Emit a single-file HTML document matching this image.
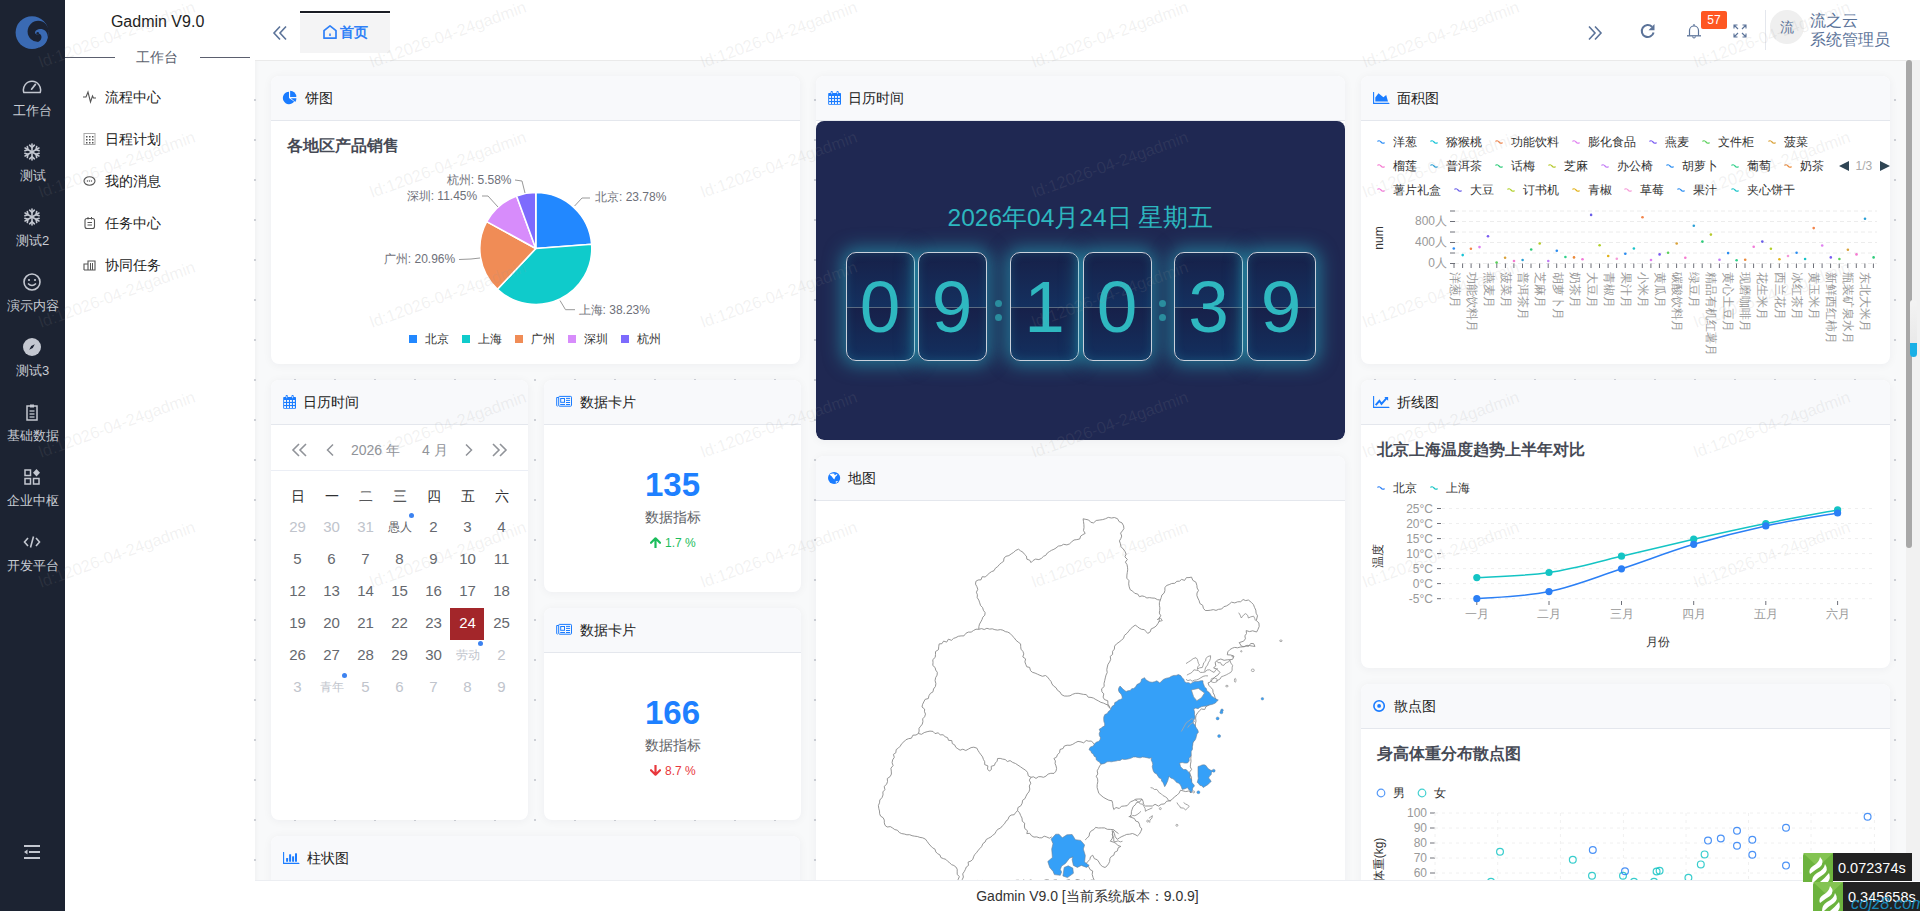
<!DOCTYPE html><html><head><meta charset="utf-8"><title>Gadmin</title><style>
*{margin:0;padding:0;box-sizing:border-box}
html,body{width:1920px;height:911px;overflow:hidden;background:#f8f9fa;font-family:"Liberation Sans",sans-serif;color:#303133}
.a{position:absolute}
.t{position:absolute;white-space:nowrap;line-height:1}
.side{left:0;top:0;width:65px;height:911px;background:#1c2332}
.side2{left:65px;top:0;width:190px;height:911px;background:#fff;box-shadow:1px 0 4px rgba(0,0,0,0.04)}
.hdr{left:255px;top:0;width:1665px;height:61px;background:#fff;border-bottom:1px solid #eaeaea}
.card{position:absolute;background:#fff;border-radius:8px;box-shadow:0 1px 10px rgba(30,40,60,0.05);overflow:hidden}
.ch{position:absolute;left:0;top:0;right:0;height:45px;background:#f8f9fb;border-bottom:1px solid #e4e7ed}
.ct{position:absolute;left:34px;top:14px;font-size:14px;line-height:16px;color:#222}
.ci{position:absolute;left:12px;top:15px;width:14px;height:14px}
.mi{font-size:13px;color:#c8ccd4;text-align:center;width:65px;left:0}
.m2{font-size:14px;color:#222;left:105px}
</style></head><body>
<div class="a side"></div>
<svg class="a" style="left:0;top:0" width="65" height="65" viewBox="0 0 65 65">
<circle cx="32" cy="32.6" r="16.4" fill="#3a6ab3"/>
<circle cx="38.2" cy="31.4" r="10.6" fill="#1b2232"/>
<path d="M39.5 47.5 C45 45.5 48 41 47.6 35.8 C47.2 31 43.5 28.6 39.6 29 C36 29.4 34.4 32 35.3 33.6 C36.2 35.2 38.6 35 38.9 33.5 C41.6 34.4 42.3 37.5 40.6 40 C39 42.3 35.5 43.2 32.5 42.8 Z" fill="#3a6ab3"/>
<circle cx="37.7" cy="33.4" r="1.3" fill="#1b2232"/>
</svg>
<svg class="a" style="left:22px;top:77px" width="20" height="20" viewBox="0 0 20 20"><path d="M1.8 15.5 A8.6 8.6 0 1 1 18.2 15.5 Z" fill="none" stroke="#c3c7d0" stroke-width="1.5" stroke-linejoin="round"/><line x1="9.6" y1="12.2" x2="13.4" y2="7.4" stroke="#c3c7d0" stroke-width="1.7" stroke-linecap="round"/></svg>
<div class="t mi" style="top:104px">工作台</div>
<svg class="a" style="left:22px;top:142px" width="20" height="20" viewBox="0 0 20 20"><g stroke="#c3c7d0" stroke-width="1.6" stroke-linecap="round" fill="none"><g transform="rotate(0 10 10)"><line x1="10" y1="2" x2="10" y2="18"/><path d="M7.6 3.2 L10 5.4 L12.4 3.2"/><path d="M7.6 16.8 L10 14.6 L12.4 16.8"/></g><g transform="rotate(60 10 10)"><line x1="10" y1="2" x2="10" y2="18"/><path d="M7.6 3.2 L10 5.4 L12.4 3.2"/><path d="M7.6 16.8 L10 14.6 L12.4 16.8"/></g><g transform="rotate(120 10 10)"><line x1="10" y1="2" x2="10" y2="18"/><path d="M7.6 3.2 L10 5.4 L12.4 3.2"/><path d="M7.6 16.8 L10 14.6 L12.4 16.8"/></g></g></svg>
<div class="t mi" style="top:169px">测试</div>
<svg class="a" style="left:22px;top:207px" width="20" height="20" viewBox="0 0 20 20"><g stroke="#c3c7d0" stroke-width="1.6" stroke-linecap="round" fill="none"><g transform="rotate(0 10 10)"><line x1="10" y1="2" x2="10" y2="18"/><path d="M7.6 3.2 L10 5.4 L12.4 3.2"/><path d="M7.6 16.8 L10 14.6 L12.4 16.8"/></g><g transform="rotate(60 10 10)"><line x1="10" y1="2" x2="10" y2="18"/><path d="M7.6 3.2 L10 5.4 L12.4 3.2"/><path d="M7.6 16.8 L10 14.6 L12.4 16.8"/></g><g transform="rotate(120 10 10)"><line x1="10" y1="2" x2="10" y2="18"/><path d="M7.6 3.2 L10 5.4 L12.4 3.2"/><path d="M7.6 16.8 L10 14.6 L12.4 16.8"/></g></g></svg>
<div class="t mi" style="top:234px">测试2</div>
<svg class="a" style="left:22px;top:272px" width="20" height="20" viewBox="0 0 20 20"><circle cx="10" cy="10" r="8" fill="none" stroke="#c3c7d0" stroke-width="1.6"/><circle cx="7" cy="8" r="1.1" fill="#c3c7d0"/><circle cx="13" cy="8" r="1.1" fill="#c3c7d0"/><path d="M6 11.5 Q10 15.5 14 11.5" fill="none" stroke="#c3c7d0" stroke-width="1.5"/></svg>
<div class="t mi" style="top:299px">演示内容</div>
<svg class="a" style="left:22px;top:337px" width="20" height="20" viewBox="0 0 20 20"><circle cx="10" cy="10" r="9" fill="#c3c7d0"/><path d="M12.8 7.2 L10.8 11 L7.2 12.8 L9.2 9 Z" fill="#1b2232"/></svg>
<div class="t mi" style="top:364px">测试3</div>
<svg class="a" style="left:22px;top:402px" width="20" height="20" viewBox="0 0 20 20"><path d="M5 4 H15 V18 H5 Z" fill="none" stroke="#c3c7d0" stroke-width="1.5"/><rect x="8" y="2.5" width="4" height="3" fill="#c3c7d0"/><line x1="7.5" y1="9" x2="12.5" y2="9" stroke="#c3c7d0" stroke-width="1.3"/><line x1="7.5" y1="12" x2="12.5" y2="12" stroke="#c3c7d0" stroke-width="1.3"/><line x1="7.5" y1="15" x2="12.5" y2="15" stroke="#c3c7d0" stroke-width="1.3"/></svg>
<div class="t mi" style="top:429px">基础数据</div>
<svg class="a" style="left:22px;top:467px" width="20" height="20" viewBox="0 0 20 20"><rect x="3" y="3" width="5.5" height="5.5" fill="none" stroke="#c3c7d0" stroke-width="1.5"/><path d="M14.5 2 L18 5.7 L14.5 9.4 L11 5.7 Z" fill="#c3c7d0"/><rect x="3" y="11.5" width="5.5" height="5.5" fill="none" stroke="#c3c7d0" stroke-width="1.5"/><rect x="11.5" y="11.5" width="5.5" height="5.5" fill="none" stroke="#c3c7d0" stroke-width="1.5"/></svg>
<div class="t mi" style="top:494px">企业中枢</div>
<svg class="a" style="left:22px;top:532px" width="20" height="20" viewBox="0 0 20 20"><path d="M6 6 L2.5 10 L6 14 M14 6 L17.5 10 L14 14 M11.5 4.5 L8.5 15.5" fill="none" stroke="#c3c7d0" stroke-width="1.6"/></svg>
<div class="t mi" style="top:559px">开发平台</div>
<svg class="a" style="left:22px;top:843px" width="20" height="18" viewBox="0 0 20 18">
<rect x="2" y="2" width="16" height="2" fill="#c3c7d0"/><rect x="7" y="8" width="11" height="2" fill="#c3c7d0"/><rect x="2" y="14" width="16" height="2" fill="#c3c7d0"/><path d="M2 9 L5.5 6.5 V11.5 Z" fill="#c3c7d0"/></svg>
<div class="a side2"></div>
<div class="t" style="left:62.6px;width:190px;text-align:center;top:13px;font-size:16px;line-height:18px;color:#222">Gadmin V9.0</div>
<div class="a" style="left:65px;top:57px;width:50px;height:1px;background:#5b5f6e"></div>
<div class="a" style="left:200px;top:57px;width:50px;height:1px;background:#5b5f6e"></div>
<div class="t" style="left:136px;top:49px;font-size:14px;line-height:16px;color:#5b5f6e">工作台</div>
<svg class="a" style="left:83px;top:90px" width="14" height="14" viewBox="0 0 14 14"><path d="M0 7 H3 L5 2 L7.5 12 L9.5 6 L10.5 8 H13" fill="none" stroke="#555" stroke-width="1.1"/></svg>
<div class="t m2" style="top:89px;line-height:16px">流程中心</div>
<svg class="a" style="left:83px;top:132px" width="14" height="14" viewBox="0 0 14 14"><rect x="1" y="1.5" width="11" height="11" fill="none" stroke="#aaa" stroke-width="1"/><rect x="3" y="4" width="1.5" height="1.5" fill="#555"/><rect x="3" y="7" width="1.5" height="1.5" fill="#555"/><rect x="3" y="10" width="1.5" height="1.5" fill="#555"/><rect x="6" y="4" width="1.5" height="1.5" fill="#555"/><rect x="6" y="7" width="1.5" height="1.5" fill="#555"/><rect x="6" y="10" width="1.5" height="1.5" fill="#555"/><rect x="9" y="4" width="1.5" height="1.5" fill="#555"/><rect x="9" y="7" width="1.5" height="1.5" fill="#555"/><rect x="9" y="10" width="1.5" height="1.5" fill="#555"/></svg>
<div class="t m2" style="top:131px;line-height:16px">日程计划</div>
<svg class="a" style="left:83px;top:174px" width="14" height="14" viewBox="0 0 14 14"><ellipse cx="6.5" cy="7" rx="5.5" ry="4.2" fill="none" stroke="#555" stroke-width="1.1"/><circle cx="4.5" cy="7" r="0.7" fill="#555"/><circle cx="6.5" cy="7" r="0.7" fill="#555"/><circle cx="8.5" cy="7" r="0.7" fill="#555"/></svg>
<div class="t m2" style="top:173px;line-height:16px">我的消息</div>
<svg class="a" style="left:83px;top:216px" width="14" height="14" viewBox="0 0 14 14"><rect x="2" y="2.5" width="9.5" height="10" rx="2" fill="none" stroke="#555" stroke-width="1.1"/><line x1="4.5" y1="6.5" x2="9" y2="6.5" stroke="#555" stroke-width="1"/><line x1="4.5" y1="9" x2="9" y2="9" stroke="#555" stroke-width="1"/><line x1="5" y1="1" x2="5" y2="3.5" stroke="#555"/><line x1="8.5" y1="1" x2="8.5" y2="3.5" stroke="#555"/></svg>
<div class="t m2" style="top:215px;line-height:16px">任务中心</div>
<svg class="a" style="left:83px;top:258px" width="14" height="14" viewBox="0 0 14 14"><path d="M1 12 V6 H5 V12 M5 12 V3 H12 V12 H1" fill="none" stroke="#555" stroke-width="1.1"/><line x1="7.5" y1="5" x2="7.5" y2="12" stroke="#555"/><line x1="9.5" y1="5" x2="9.5" y2="12" stroke="#555"/></svg>
<div class="t m2" style="top:257px;line-height:16px">协同任务</div>
<div class="a" style="left:254px;top:61px;width:1652px;height:819px;background-image:radial-gradient(circle at 1px 1px,#cdd0d6 0.9px,transparent 1.3px);background-size:40px 40px;background-position:0px 38px"></div>
<div class="a hdr"></div>
<svg class="a" style="left:272px;top:25px" width="16" height="16" viewBox="0 0 16 16"><path d="M8 1.5 L2 8 L8 14.5 M14 1.5 L8 8 L14 14.5" fill="none" stroke="#5b7399" stroke-width="1.6"/></svg>
<div class="a" style="left:300px;top:11px;width:90px;height:2px;background:#1a1c24"></div>
<div class="a" style="left:300px;top:14px;width:90px;height:39px;background:#f4f4f5"></div>
<svg class="a" style="left:322px;top:24px" width="16" height="16" viewBox="0 0 16 16"><path d="M2 14.2 V6.6 L8 1.8 L14 6.6 V14.2 Z" fill="none" stroke="#2f80f7" stroke-width="1.7" stroke-linejoin="round"/><line x1="8" y1="9.5" x2="8" y2="12" stroke="#2f80f7" stroke-width="1.5"/></svg>
<div class="t" style="left:340px;top:24px;font-size:14px;line-height:16px;color:#2f80f7;font-weight:bold">首页</div>
<svg class="a" style="left:1587px;top:25px" width="16" height="16" viewBox="0 0 16 16"><path d="M2 1.5 L8 8 L2 14.5 M8 1.5 L14 8 L8 14.5" fill="none" stroke="#5b7399" stroke-width="1.6"/></svg>
<svg class="a" style="left:1640px;top:23px" width="16" height="16" viewBox="0 0 16 16"><path d="M13.6 9.5 A6 6 0 1 1 12 3.8" fill="none" stroke="#5b7399" stroke-width="2"/><path d="M14.5 1 V7.2 H8.5 Z" fill="#5b7399"/></svg>
<svg class="a" style="left:1686px;top:23px" width="16" height="16" viewBox="0 0 16 16"><path d="M3.5 12.5 V7.5 A4.5 4.5 0 0 1 12.5 7.5 V12.5" fill="none" stroke="#5b7399" stroke-width="1.2"/><line x1="1" y1="12.8" x2="15" y2="12.8" stroke="#5b7399" stroke-width="1.3"/><path d="M6.5 13.5 A1.5 1.5 0 0 0 9.5 13.5" fill="none" stroke="#5b7399" stroke-width="1"/><line x1="8" y1="1" x2="8" y2="3" stroke="#5b7399" stroke-width="1.2"/></svg>
<div class="a" style="left:1701px;top:11px;width:26px;height:18px;background:#fe5722;border-radius:2px;color:#fff;font-size:12px;line-height:18px;text-align:center">57</div>
<svg class="a" style="left:1733px;top:24px" width="14" height="14" viewBox="0 0 14 14"><g fill="none" stroke="#5b7399" stroke-width="1.1"><path d="M1 4.5 V1 H4.5 M1 1 L5 5"/><path d="M9.5 1 H13 V4.5 M13 1 L9 5"/><path d="M1 9.5 V13 H4.5 M1 13 L5 9"/><path d="M13 9.5 V13 H9.5 M13 13 L9 9"/></g></svg>
<div class="a" style="left:1765px;top:10px;width:1px;height:40px;background:#e4e7ed"></div>
<div class="a" style="left:1770px;top:10px;width:34px;height:34px;border-radius:50%;background:#efefef;color:#5b7399;font-size:14px;line-height:34px;text-align:center">流</div>
<div class="t" style="left:1810px;top:11px;font-size:16px;line-height:19px;color:#5b7399">流之云<br>系统管理员</div>
<div class="a" style="left:1906px;top:60px;width:14px;height:820px;background:#f1f1f1"></div>
<div class="a" style="left:1906px;top:60px;width:6px;height:488px;background:#a8a8a8;border-radius:3px"></div>
<div class="a" style="left:1910px;top:300px;width:7px;height:56px;background:linear-gradient(#f3f3f3,#e6e6e6);border-radius:3px"></div>
<div class="a" style="left:1910px;top:343px;width:7px;height:14px;background:#1ab0e6;border-radius:0 0 4px 4px"></div>
<div class="card" style="left:271px;top:76px;width:529px;height:288px">
<div class="ch"></div><svg class="a" style="left:11px;top:14px" width="20" height="20" viewBox="0 0 20 20"><path d="M7 8 L7 1.8 A6.2 6.2 0 1 0 12.1 11.6 Z" fill="#1a7cff"/><path d="M8.1 6.9 L8.1 0.7 A6.2 6.2 0 0 1 14.3 6.9 Z" fill="#1a7cff"/><path d="M8.9 8.3 L14.4 8.3 A6.2 6.2 0 0 1 13.3 11.9 Z" fill="#1a7cff"/></svg><div class="ct" style="left:34px">饼图</div>
<div class="t" style="left:16px;top:61px;font-size:16px;line-height:18px;font-weight:bold;color:#464a55">各地区产品销售</div><svg class="a" style="left:0;top:0" width="529" height="287" viewBox="0 0 529 287"><path d="M264.8 172.5 L264.80 116.50 A56 56 0 0 1 320.64 168.21 Z" fill="#2288ff" stroke="#fff" stroke-width="1.6" stroke-linejoin="round"/><path d="M264.8 172.5 L320.64 168.21 A56 56 0 0 1 226.44 213.30 Z" fill="#0fcbcb" stroke="#fff" stroke-width="1.6" stroke-linejoin="round"/><path d="M264.8 172.5 L226.44 213.30 A56 56 0 0 1 215.68 145.61 Z" fill="#f08c56" stroke="#fff" stroke-width="1.6" stroke-linejoin="round"/><path d="M264.8 172.5 L215.68 145.61 A56 56 0 0 1 245.57 119.91 Z" fill="#d78cfb" stroke="#fff" stroke-width="1.6" stroke-linejoin="round"/><path d="M264.8 172.5 L245.57 119.91 A56 56 0 0 1 264.80 116.50 Z" fill="#7d6bfd" stroke="#fff" stroke-width="1.6" stroke-linejoin="round"/><polyline points="303.6,130 311,122 319,122" fill="none" stroke="#999" stroke-width="1"/><polyline points="289,224.5 294.5,233.7 304,233.7" fill="none" stroke="#999" stroke-width="1"/><polyline points="188,183.5 200,183 209,182" fill="none" stroke="#999" stroke-width="1"/><polyline points="211,120 217,120 227,131" fill="none" stroke="#999" stroke-width="1"/><polyline points="244,104 251,105 254,117" fill="none" stroke="#999" stroke-width="1"/></svg><div class="t" style="left:324px;top:114.4px;font-size:12px;line-height:14px;color:#6e7079">北京: 23.78%</div><div class="t" style="left:307.6px;top:226.7px;font-size:12px;line-height:14px;color:#6e7079">上海: 38.23%</div><div class="t" style="left:112.8px;top:176px;font-size:12px;line-height:14px;color:#6e7079">广州: 20.96%</div><div class="t" style="left:135.7px;top:113px;font-size:12px;line-height:14px;color:#6e7079">深圳: 11.45%</div><div class="t" style="left:175.8px;top:96.6px;font-size:12px;line-height:14px;color:#6e7079">杭州: 5.58%</div><div class="a" style="left:138px;top:259px;width:8px;height:8px;background:#2288ff"></div><div class="t" style="left:154px;top:256px;font-size:12px;line-height:14px;color:#333">北京</div><div class="a" style="left:191px;top:259px;width:8px;height:8px;background:#0fcbcb"></div><div class="t" style="left:207px;top:256px;font-size:12px;line-height:14px;color:#333">上海</div><div class="a" style="left:244px;top:259px;width:8px;height:8px;background:#f08c56"></div><div class="t" style="left:260px;top:256px;font-size:12px;line-height:14px;color:#333">广州</div><div class="a" style="left:297px;top:259px;width:8px;height:8px;background:#d78cfb"></div><div class="t" style="left:313px;top:256px;font-size:12px;line-height:14px;color:#333">深圳</div><div class="a" style="left:350px;top:259px;width:8px;height:8px;background:#7d6bfd"></div><div class="t" style="left:366px;top:256px;font-size:12px;line-height:14px;color:#333">杭州</div>
</div>
<div class="card" style="left:816px;top:76px;width:529px;height:364px">
<div class="ch"></div><svg class="a" style="left:11px;top:14px" width="20" height="20" viewBox="0 0 20 20"><rect x="1.2" y="3" width="12.8" height="11.8" rx="0.8" fill="#1a7cff"/><rect x="2.10" y="6.00" width="1.9" height="1.9" fill="#f8f9fb"/><rect x="2.10" y="9.05" width="1.9" height="1.9" fill="#f8f9fb"/><rect x="2.10" y="12.10" width="1.9" height="1.9" fill="#f8f9fb"/><rect x="5.05" y="6.00" width="1.9" height="1.9" fill="#f8f9fb"/><rect x="5.05" y="9.05" width="1.9" height="1.9" fill="#f8f9fb"/><rect x="5.05" y="12.10" width="1.9" height="1.9" fill="#f8f9fb"/><rect x="8.00" y="6.00" width="1.9" height="1.9" fill="#f8f9fb"/><rect x="8.00" y="9.05" width="1.9" height="1.9" fill="#f8f9fb"/><rect x="8.00" y="12.10" width="1.9" height="1.9" fill="#f8f9fb"/><rect x="10.95" y="6.00" width="1.9" height="1.9" fill="#f8f9fb"/><rect x="10.95" y="9.05" width="1.9" height="1.9" fill="#f8f9fb"/><rect x="10.95" y="12.10" width="1.9" height="1.9" fill="#f8f9fb"/><rect x="3.6" y="1" width="2.2" height="3.8" rx="1" fill="#1a7cff"/><rect x="9.5" y="1" width="2.2" height="3.8" rx="1" fill="#1a7cff"/><line x1="4.7" y1="2" x2="4.7" y2="4.2" stroke="#f8f9fb" stroke-width="0.7"/><line x1="10.6" y1="2" x2="10.6" y2="4.2" stroke="#f8f9fb" stroke-width="0.7"/></svg><div class="ct" style="left:32px">日历时间</div>
<div class="a" style="left:0;top:45px;width:529px;height:319px;background:#1f2852;border-radius:8px"></div><div class="t" style="left:0;width:529px;text-align:center;top:128px;font-size:24.5px;line-height:28px;color:#2db7bf">2026年04月24日 星期五</div><div class="a" style="left:29.5px;top:176px;width:69px;height:109px;border:1px solid #c9d1dc;border-radius:10px;box-shadow:0 0 18px 4px rgba(40,180,200,0.55), inset 0 0 10px rgba(40,180,200,0.22);overflow:hidden;background:linear-gradient(#172048 0%,#14305f 50%,#172049 50.5%,#13305f 100%)"><div class="a" style="left:0;top:53.5px;width:67px;height:1px;background:#5b6b82"></div><div class="t" style="left:0;width:67px;text-align:center;top:14px;font-size:73px;line-height:80px;color:#2fb8c0">0</div></div><div class="a" style="left:101.5px;top:176px;width:69px;height:109px;border:1px solid #c9d1dc;border-radius:10px;box-shadow:0 0 18px 4px rgba(40,180,200,0.55), inset 0 0 10px rgba(40,180,200,0.22);overflow:hidden;background:linear-gradient(#172048 0%,#14305f 50%,#172049 50.5%,#13305f 100%)"><div class="a" style="left:0;top:53.5px;width:67px;height:1px;background:#5b6b82"></div><div class="t" style="left:0;width:67px;text-align:center;top:14px;font-size:73px;line-height:80px;color:#2fb8c0">9</div></div><div class="a" style="left:194px;top:176px;width:69px;height:109px;border:1px solid #c9d1dc;border-radius:10px;box-shadow:0 0 18px 4px rgba(40,180,200,0.55), inset 0 0 10px rgba(40,180,200,0.22);overflow:hidden;background:linear-gradient(#172048 0%,#14305f 50%,#172049 50.5%,#13305f 100%)"><div class="a" style="left:0;top:53.5px;width:67px;height:1px;background:#5b6b82"></div><div class="t" style="left:0;width:67px;text-align:center;top:14px;font-size:73px;line-height:80px;color:#2fb8c0">1</div></div><div class="a" style="left:266.5px;top:176px;width:69px;height:109px;border:1px solid #c9d1dc;border-radius:10px;box-shadow:0 0 18px 4px rgba(40,180,200,0.55), inset 0 0 10px rgba(40,180,200,0.22);overflow:hidden;background:linear-gradient(#172048 0%,#14305f 50%,#172049 50.5%,#13305f 100%)"><div class="a" style="left:0;top:53.5px;width:67px;height:1px;background:#5b6b82"></div><div class="t" style="left:0;width:67px;text-align:center;top:14px;font-size:73px;line-height:80px;color:#2fb8c0">0</div></div><div class="a" style="left:358px;top:176px;width:69px;height:109px;border:1px solid #c9d1dc;border-radius:10px;box-shadow:0 0 18px 4px rgba(40,180,200,0.55), inset 0 0 10px rgba(40,180,200,0.22);overflow:hidden;background:linear-gradient(#172048 0%,#14305f 50%,#172049 50.5%,#13305f 100%)"><div class="a" style="left:0;top:53.5px;width:67px;height:1px;background:#5b6b82"></div><div class="t" style="left:0;width:67px;text-align:center;top:14px;font-size:73px;line-height:80px;color:#2fb8c0">3</div></div><div class="a" style="left:430.5px;top:176px;width:69px;height:109px;border:1px solid #c9d1dc;border-radius:10px;box-shadow:0 0 18px 4px rgba(40,180,200,0.55), inset 0 0 10px rgba(40,180,200,0.22);overflow:hidden;background:linear-gradient(#172048 0%,#14305f 50%,#172049 50.5%,#13305f 100%)"><div class="a" style="left:0;top:53.5px;width:67px;height:1px;background:#5b6b82"></div><div class="t" style="left:0;width:67px;text-align:center;top:14px;font-size:73px;line-height:80px;color:#2fb8c0">9</div></div><div class="a" style="left:179.0px;top:224px;width:7px;height:7px;border-radius:50%;background:#2a8d9e"></div><div class="a" style="left:179.0px;top:238px;width:7px;height:7px;border-radius:50%;background:#2a8d9e"></div><div class="a" style="left:342.5px;top:224px;width:7px;height:7px;border-radius:50%;background:#2a8d9e"></div><div class="a" style="left:342.5px;top:238px;width:7px;height:7px;border-radius:50%;background:#2a8d9e"></div>
</div>
<div class="card" style="left:1361px;top:76px;width:529px;height:288px">
<div class="ch"></div><svg class="a" style="left:12px;top:16px" width="20" height="20" viewBox="0 0 20 20"><path d="M0.6 0.4 V11.4 H15.9" fill="none" stroke="#1a7cff" stroke-width="1.1" stroke-linecap="round"/><path d="M2.3 9.6 V5.5 L5.5 1.2 L10.4 5.2 L13.2 3 L15 9.6 Z" fill="#1a7cff"/></svg><div class="ct" style="left:36px">面积图</div>
<svg class="a" style="left:15.700000000000045px;top:62.80000000000001px" width="8" height="6" viewBox="0 0 8 6"><path d="M0.5 2.5 Q2 0.8 4 3 Q6 5.2 7.5 3.5" fill="none" stroke="#2b8cf6" stroke-width="1.2"/></svg><div class="t" style="left:31.700000000000045px;top:58.80000000000001px;font-size:12px;line-height:14px;color:#333">洋葱</div><svg class="a" style="left:69px;top:62.80000000000001px" width="8" height="6" viewBox="0 0 8 6"><path d="M0.5 2.5 Q2 0.8 4 3 Q6 5.2 7.5 3.5" fill="none" stroke="#15c3d6" stroke-width="1.2"/></svg><div class="t" style="left:85px;top:58.80000000000001px;font-size:12px;line-height:14px;color:#333">猕猴桃</div><svg class="a" style="left:134px;top:62.80000000000001px" width="8" height="6" viewBox="0 0 8 6"><path d="M0.5 2.5 Q2 0.8 4 3 Q6 5.2 7.5 3.5" fill="none" stroke="#f3844a" stroke-width="1.2"/></svg><div class="t" style="left:150px;top:58.80000000000001px;font-size:12px;line-height:14px;color:#333">功能饮料</div><svg class="a" style="left:210.5999999999999px;top:62.80000000000001px" width="8" height="6" viewBox="0 0 8 6"><path d="M0.5 2.5 Q2 0.8 4 3 Q6 5.2 7.5 3.5" fill="none" stroke="#e07ff0" stroke-width="1.2"/></svg><div class="t" style="left:226.5999999999999px;top:58.80000000000001px;font-size:12px;line-height:14px;color:#333">膨化食品</div><svg class="a" style="left:288px;top:62.80000000000001px" width="8" height="6" viewBox="0 0 8 6"><path d="M0.5 2.5 Q2 0.8 4 3 Q6 5.2 7.5 3.5" fill="none" stroke="#7a5cf2" stroke-width="1.2"/></svg><div class="t" style="left:304px;top:58.80000000000001px;font-size:12px;line-height:14px;color:#333">燕麦</div><svg class="a" style="left:341px;top:62.80000000000001px" width="8" height="6" viewBox="0 0 8 6"><path d="M0.5 2.5 Q2 0.8 4 3 Q6 5.2 7.5 3.5" fill="none" stroke="#5bd05b" stroke-width="1.2"/></svg><div class="t" style="left:357px;top:58.80000000000001px;font-size:12px;line-height:14px;color:#333">文件柜</div><svg class="a" style="left:406.5px;top:62.80000000000001px" width="8" height="6" viewBox="0 0 8 6"><path d="M0.5 2.5 Q2 0.8 4 3 Q6 5.2 7.5 3.5" fill="none" stroke="#d9a23a" stroke-width="1.2"/></svg><div class="t" style="left:422.5px;top:58.80000000000001px;font-size:12px;line-height:14px;color:#333">菠菜</div><svg class="a" style="left:15.700000000000045px;top:86.80000000000001px" width="8" height="6" viewBox="0 0 8 6"><path d="M0.5 2.5 Q2 0.8 4 3 Q6 5.2 7.5 3.5" fill="none" stroke="#f57ad0" stroke-width="1.2"/></svg><div class="t" style="left:31.700000000000045px;top:82.80000000000001px;font-size:12px;line-height:14px;color:#333">榴莲</div><svg class="a" style="left:69px;top:86.80000000000001px" width="8" height="6" viewBox="0 0 8 6"><path d="M0.5 2.5 Q2 0.8 4 3 Q6 5.2 7.5 3.5" fill="none" stroke="#2a9fd6" stroke-width="1.2"/></svg><div class="t" style="left:85px;top:82.80000000000001px;font-size:12px;line-height:14px;color:#333">普洱茶</div><svg class="a" style="left:134px;top:86.80000000000001px" width="8" height="6" viewBox="0 0 8 6"><path d="M0.5 2.5 Q2 0.8 4 3 Q6 5.2 7.5 3.5" fill="none" stroke="#2ecb7a" stroke-width="1.2"/></svg><div class="t" style="left:150px;top:82.80000000000001px;font-size:12px;line-height:14px;color:#333">话梅</div><svg class="a" style="left:187px;top:86.80000000000001px" width="8" height="6" viewBox="0 0 8 6"><path d="M0.5 2.5 Q2 0.8 4 3 Q6 5.2 7.5 3.5" fill="none" stroke="#b5c92c" stroke-width="1.2"/></svg><div class="t" style="left:203px;top:82.80000000000001px;font-size:12px;line-height:14px;color:#333">芝麻</div><svg class="a" style="left:240px;top:86.80000000000001px" width="8" height="6" viewBox="0 0 8 6"><path d="M0.5 2.5 Q2 0.8 4 3 Q6 5.2 7.5 3.5" fill="none" stroke="#c27bf5" stroke-width="1.2"/></svg><div class="t" style="left:256px;top:82.80000000000001px;font-size:12px;line-height:14px;color:#333">办公椅</div><svg class="a" style="left:305.4000000000001px;top:86.80000000000001px" width="8" height="6" viewBox="0 0 8 6"><path d="M0.5 2.5 Q2 0.8 4 3 Q6 5.2 7.5 3.5" fill="none" stroke="#2a8cf0" stroke-width="1.2"/></svg><div class="t" style="left:321.4000000000001px;top:82.80000000000001px;font-size:12px;line-height:14px;color:#333">胡萝卜</div><svg class="a" style="left:370px;top:86.80000000000001px" width="8" height="6" viewBox="0 0 8 6"><path d="M0.5 2.5 Q2 0.8 4 3 Q6 5.2 7.5 3.5" fill="none" stroke="#31d08a" stroke-width="1.2"/></svg><div class="t" style="left:386px;top:82.80000000000001px;font-size:12px;line-height:14px;color:#333">葡萄</div><svg class="a" style="left:423px;top:86.80000000000001px" width="8" height="6" viewBox="0 0 8 6"><path d="M0.5 2.5 Q2 0.8 4 3 Q6 5.2 7.5 3.5" fill="none" stroke="#ec8a3a" stroke-width="1.2"/></svg><div class="t" style="left:439px;top:82.80000000000001px;font-size:12px;line-height:14px;color:#333">奶茶</div><svg class="a" style="left:15.700000000000045px;top:110.5px" width="8" height="6" viewBox="0 0 8 6"><path d="M0.5 2.5 Q2 0.8 4 3 Q6 5.2 7.5 3.5" fill="none" stroke="#f27ad9" stroke-width="1.2"/></svg><div class="t" style="left:31.700000000000045px;top:106.5px;font-size:12px;line-height:14px;color:#333">薯片礼盒</div><svg class="a" style="left:92.70000000000005px;top:110.5px" width="8" height="6" viewBox="0 0 8 6"><path d="M0.5 2.5 Q2 0.8 4 3 Q6 5.2 7.5 3.5" fill="none" stroke="#6a5ee8" stroke-width="1.2"/></svg><div class="t" style="left:108.70000000000005px;top:106.5px;font-size:12px;line-height:14px;color:#333">大豆</div><svg class="a" style="left:146px;top:110.5px" width="8" height="6" viewBox="0 0 8 6"><path d="M0.5 2.5 Q2 0.8 4 3 Q6 5.2 7.5 3.5" fill="none" stroke="#b0d02a" stroke-width="1.2"/></svg><div class="t" style="left:162px;top:106.5px;font-size:12px;line-height:14px;color:#333">订书机</div><svg class="a" style="left:210.5999999999999px;top:110.5px" width="8" height="6" viewBox="0 0 8 6"><path d="M0.5 2.5 Q2 0.8 4 3 Q6 5.2 7.5 3.5" fill="none" stroke="#e2b21a" stroke-width="1.2"/></svg><div class="t" style="left:226.5999999999999px;top:106.5px;font-size:12px;line-height:14px;color:#333">青椒</div><svg class="a" style="left:263px;top:110.5px" width="8" height="6" viewBox="0 0 8 6"><path d="M0.5 2.5 Q2 0.8 4 3 Q6 5.2 7.5 3.5" fill="none" stroke="#f59ad8" stroke-width="1.2"/></svg><div class="t" style="left:279px;top:106.5px;font-size:12px;line-height:14px;color:#333">草莓</div><svg class="a" style="left:316px;top:110.5px" width="8" height="6" viewBox="0 0 8 6"><path d="M0.5 2.5 Q2 0.8 4 3 Q6 5.2 7.5 3.5" fill="none" stroke="#2a8cf0" stroke-width="1.2"/></svg><div class="t" style="left:332px;top:106.5px;font-size:12px;line-height:14px;color:#333">果汁</div><svg class="a" style="left:370px;top:110.5px" width="8" height="6" viewBox="0 0 8 6"><path d="M0.5 2.5 Q2 0.8 4 3 Q6 5.2 7.5 3.5" fill="none" stroke="#18c3c8" stroke-width="1.2"/></svg><div class="t" style="left:386px;top:106.5px;font-size:12px;line-height:14px;color:#333">夹心饼干</div><svg class="a" style="left:478px;top:84.80000000000001px" width="10" height="10" viewBox="0 0 10 10"><path d="M10 0 L0 5 L10 10 Z" fill="#2f4554"/></svg><div class="t" style="left:494.5px;top:82.80000000000001px;font-size:12px;line-height:14px;color:#aaa">1/3</div><svg class="a" style="left:519px;top:84.80000000000001px" width="10" height="10" viewBox="0 0 10 10"><path d="M0 0 L10 5 L0 10 Z" fill="#2f4554"/></svg><svg class="a" style="left:0;top:0" width="529" height="288" viewBox="0 0 529 288"><line x1="94" y1="187.5" x2="516" y2="187.5" stroke="#ececec" stroke-width="1" stroke-dasharray="4 3"/><line x1="89" y1="187.5" x2="94" y2="187.5" stroke="#6e7079" stroke-width="1"/><line x1="94" y1="177.0" x2="516" y2="177.0" stroke="#ececec" stroke-width="1" stroke-dasharray="4 3"/><line x1="89" y1="177.0" x2="94" y2="177.0" stroke="#6e7079" stroke-width="1"/><line x1="94" y1="166.5" x2="516" y2="166.5" stroke="#ececec" stroke-width="1" stroke-dasharray="4 3"/><line x1="89" y1="166.5" x2="94" y2="166.5" stroke="#6e7079" stroke-width="1"/><line x1="94" y1="156.0" x2="516" y2="156.0" stroke="#ececec" stroke-width="1" stroke-dasharray="4 3"/><line x1="89" y1="156.0" x2="94" y2="156.0" stroke="#6e7079" stroke-width="1"/><line x1="94" y1="145.5" x2="516" y2="145.5" stroke="#ececec" stroke-width="1" stroke-dasharray="4 3"/><line x1="89" y1="145.5" x2="94" y2="145.5" stroke="#6e7079" stroke-width="1"/><line x1="94" y1="135.0" x2="516" y2="135.0" stroke="#ececec" stroke-width="1" stroke-dasharray="4 3"/><line x1="89" y1="135.0" x2="94" y2="135.0" stroke="#6e7079" stroke-width="1"/><line x1="93.0" y1="187.5" x2="93.0" y2="192" stroke="#6e7079" stroke-width="1"/><line x1="101.6" y1="187.5" x2="101.6" y2="192" stroke="#6e7079" stroke-width="1"/><line x1="110.1" y1="187.5" x2="110.1" y2="192" stroke="#6e7079" stroke-width="1"/><line x1="118.7" y1="187.5" x2="118.7" y2="192" stroke="#6e7079" stroke-width="1"/><line x1="127.2" y1="187.5" x2="127.2" y2="192" stroke="#6e7079" stroke-width="1"/><line x1="135.8" y1="187.5" x2="135.8" y2="192" stroke="#6e7079" stroke-width="1"/><line x1="144.4" y1="187.5" x2="144.4" y2="192" stroke="#6e7079" stroke-width="1"/><line x1="152.9" y1="187.5" x2="152.9" y2="192" stroke="#6e7079" stroke-width="1"/><line x1="161.5" y1="187.5" x2="161.5" y2="192" stroke="#6e7079" stroke-width="1"/><line x1="170.0" y1="187.5" x2="170.0" y2="192" stroke="#6e7079" stroke-width="1"/><line x1="178.6" y1="187.5" x2="178.6" y2="192" stroke="#6e7079" stroke-width="1"/><line x1="187.2" y1="187.5" x2="187.2" y2="192" stroke="#6e7079" stroke-width="1"/><line x1="195.7" y1="187.5" x2="195.7" y2="192" stroke="#6e7079" stroke-width="1"/><line x1="204.3" y1="187.5" x2="204.3" y2="192" stroke="#6e7079" stroke-width="1"/><line x1="212.8" y1="187.5" x2="212.8" y2="192" stroke="#6e7079" stroke-width="1"/><line x1="221.4" y1="187.5" x2="221.4" y2="192" stroke="#6e7079" stroke-width="1"/><line x1="230.0" y1="187.5" x2="230.0" y2="192" stroke="#6e7079" stroke-width="1"/><line x1="238.5" y1="187.5" x2="238.5" y2="192" stroke="#6e7079" stroke-width="1"/><line x1="247.1" y1="187.5" x2="247.1" y2="192" stroke="#6e7079" stroke-width="1"/><line x1="255.6" y1="187.5" x2="255.6" y2="192" stroke="#6e7079" stroke-width="1"/><line x1="264.2" y1="187.5" x2="264.2" y2="192" stroke="#6e7079" stroke-width="1"/><line x1="272.8" y1="187.5" x2="272.8" y2="192" stroke="#6e7079" stroke-width="1"/><line x1="281.3" y1="187.5" x2="281.3" y2="192" stroke="#6e7079" stroke-width="1"/><line x1="289.9" y1="187.5" x2="289.9" y2="192" stroke="#6e7079" stroke-width="1"/><line x1="298.4" y1="187.5" x2="298.4" y2="192" stroke="#6e7079" stroke-width="1"/><line x1="307.0" y1="187.5" x2="307.0" y2="192" stroke="#6e7079" stroke-width="1"/><line x1="315.6" y1="187.5" x2="315.6" y2="192" stroke="#6e7079" stroke-width="1"/><line x1="324.1" y1="187.5" x2="324.1" y2="192" stroke="#6e7079" stroke-width="1"/><line x1="332.7" y1="187.5" x2="332.7" y2="192" stroke="#6e7079" stroke-width="1"/><line x1="341.2" y1="187.5" x2="341.2" y2="192" stroke="#6e7079" stroke-width="1"/><line x1="349.8" y1="187.5" x2="349.8" y2="192" stroke="#6e7079" stroke-width="1"/><line x1="358.4" y1="187.5" x2="358.4" y2="192" stroke="#6e7079" stroke-width="1"/><line x1="366.9" y1="187.5" x2="366.9" y2="192" stroke="#6e7079" stroke-width="1"/><line x1="375.5" y1="187.5" x2="375.5" y2="192" stroke="#6e7079" stroke-width="1"/><line x1="384.0" y1="187.5" x2="384.0" y2="192" stroke="#6e7079" stroke-width="1"/><line x1="392.6" y1="187.5" x2="392.6" y2="192" stroke="#6e7079" stroke-width="1"/><line x1="401.2" y1="187.5" x2="401.2" y2="192" stroke="#6e7079" stroke-width="1"/><line x1="409.7" y1="187.5" x2="409.7" y2="192" stroke="#6e7079" stroke-width="1"/><line x1="418.3" y1="187.5" x2="418.3" y2="192" stroke="#6e7079" stroke-width="1"/><line x1="426.8" y1="187.5" x2="426.8" y2="192" stroke="#6e7079" stroke-width="1"/><line x1="435.4" y1="187.5" x2="435.4" y2="192" stroke="#6e7079" stroke-width="1"/><line x1="444.0" y1="187.5" x2="444.0" y2="192" stroke="#6e7079" stroke-width="1"/><line x1="452.5" y1="187.5" x2="452.5" y2="192" stroke="#6e7079" stroke-width="1"/><line x1="461.1" y1="187.5" x2="461.1" y2="192" stroke="#6e7079" stroke-width="1"/><line x1="469.6" y1="187.5" x2="469.6" y2="192" stroke="#6e7079" stroke-width="1"/><line x1="478.2" y1="187.5" x2="478.2" y2="192" stroke="#6e7079" stroke-width="1"/><line x1="486.8" y1="187.5" x2="486.8" y2="192" stroke="#6e7079" stroke-width="1"/><line x1="495.3" y1="187.5" x2="495.3" y2="192" stroke="#6e7079" stroke-width="1"/><line x1="503.9" y1="187.5" x2="503.9" y2="192" stroke="#6e7079" stroke-width="1"/><line x1="512.4" y1="187.5" x2="512.4" y2="192" stroke="#6e7079" stroke-width="1"/><circle cx="92.8" cy="172.5" r="1.3" fill="#2b8cf6"/><circle cx="101.7" cy="179.1" r="1.3" fill="#15c3d6"/><circle cx="109.9" cy="172.8" r="1.3" fill="#f3844a"/><circle cx="118.5" cy="171.1" r="1.3" fill="#e07ff0"/><circle cx="127.0" cy="160.3" r="1.3" fill="#7a5cf2"/><circle cx="135.6" cy="186.6" r="1.3" fill="#5bd05b"/><circle cx="144.1" cy="181.7" r="1.3" fill="#d9a23a"/><circle cx="153.0" cy="185.0" r="1.3" fill="#f57ad0"/><circle cx="161.6" cy="184.0" r="1.3" fill="#2a9fd6"/><circle cx="170.2" cy="173.5" r="1.3" fill="#2ecb7a"/><circle cx="178.7" cy="167.5" r="1.3" fill="#b5c92c"/><circle cx="187.3" cy="185.0" r="1.3" fill="#c27bf5"/><circle cx="195.8" cy="174.8" r="1.3" fill="#2a8cf0"/><circle cx="204.4" cy="181.0" r="1.3" fill="#31d08a"/><circle cx="213.0" cy="181.4" r="1.3" fill="#ec8a3a"/><circle cx="221.5" cy="183.3" r="1.3" fill="#f27ad9"/><circle cx="230.1" cy="138.9" r="1.3" fill="#6a5ee8"/><circle cx="238.6" cy="169.2" r="1.3" fill="#b0d02a"/><circle cx="247.2" cy="180.0" r="1.3" fill="#e2b21a"/><circle cx="255.8" cy="182.7" r="1.3" fill="#f59ad8"/><circle cx="264.3" cy="177.7" r="1.3" fill="#2a8cf0"/><circle cx="272.9" cy="172.5" r="1.3" fill="#18c3c8"/><circle cx="281.5" cy="141.2" r="1.3" fill="#f3844a"/><circle cx="290.0" cy="184.0" r="1.3" fill="#e07ff0"/><circle cx="298.6" cy="178.4" r="1.3" fill="#7a5cf2"/><circle cx="307.1" cy="176.7" r="1.3" fill="#5bd05b"/><circle cx="315.7" cy="167.5" r="1.3" fill="#d9a23a"/><circle cx="324.3" cy="181.7" r="1.3" fill="#f57ad0"/><circle cx="332.8" cy="149.7" r="1.3" fill="#2a9fd6"/><circle cx="341.4" cy="165.6" r="1.3" fill="#2ecb7a"/><circle cx="349.9" cy="158.6" r="1.3" fill="#b5c92c"/><circle cx="358.5" cy="183.7" r="1.3" fill="#c27bf5"/><circle cx="367.1" cy="177.1" r="1.3" fill="#2a8cf0"/><circle cx="375.6" cy="184.3" r="1.3" fill="#31d08a"/><circle cx="384.2" cy="183.7" r="1.3" fill="#ec8a3a"/><circle cx="392.7" cy="170.8" r="1.3" fill="#f27ad9"/><circle cx="401.3" cy="165.6" r="1.3" fill="#6a5ee8"/><circle cx="409.9" cy="172.8" r="1.3" fill="#b0d02a"/><circle cx="418.4" cy="183.3" r="1.3" fill="#e2b21a"/><circle cx="427.0" cy="180.0" r="1.3" fill="#f59ad8"/><circle cx="435.6" cy="176.7" r="1.3" fill="#2a8cf0"/><circle cx="444.1" cy="183.0" r="1.3" fill="#18c3c8"/><circle cx="452.7" cy="152.1" r="1.3" fill="#f3844a"/><circle cx="461.2" cy="169.5" r="1.3" fill="#e07ff0"/><circle cx="469.8" cy="181.4" r="1.3" fill="#7a5cf2"/><circle cx="478.4" cy="183.0" r="1.3" fill="#5bd05b"/><circle cx="486.9" cy="173.8" r="1.3" fill="#d9a23a"/><circle cx="495.5" cy="178.4" r="1.3" fill="#f57ad0"/><circle cx="504.0" cy="142.8" r="1.3" fill="#2a9fd6"/><circle cx="512.6" cy="181.4" r="1.3" fill="#2ecb7a"/></svg><div class="t" style="right:443px;top:138px;font-size:12px;line-height:14px;color:#999;text-align:right">800人</div><div class="t" style="right:443px;top:159px;font-size:12px;line-height:14px;color:#999;text-align:right">400人</div><div class="t" style="right:443px;top:180px;font-size:12px;line-height:14px;color:#999;text-align:right">0人</div><div class="t" style="left:6px;top:155px;width:24px;text-align:center;font-size:12px;line-height:14px;color:#333;transform:rotate(-90deg)">num</div><div class="t" style="left:100.0px;top:196px;font-size:12px;line-height:12px;color:#999;transform-origin:0 0;transform:rotate(90deg)">洋葱月</div><div class="t" style="left:117.1px;top:196px;font-size:12px;line-height:12px;color:#999;transform-origin:0 0;transform:rotate(90deg)">功能饮料月</div><div class="t" style="left:134.2px;top:196px;font-size:12px;line-height:12px;color:#999;transform-origin:0 0;transform:rotate(90deg)">燕麦月</div><div class="t" style="left:151.2px;top:196px;font-size:12px;line-height:12px;color:#999;transform-origin:0 0;transform:rotate(90deg)">菠菜月</div><div class="t" style="left:168.3px;top:196px;font-size:12px;line-height:12px;color:#999;transform-origin:0 0;transform:rotate(90deg)">普洱茶月</div><div class="t" style="left:185.4px;top:196px;font-size:12px;line-height:12px;color:#999;transform-origin:0 0;transform:rotate(90deg)">芝麻月</div><div class="t" style="left:202.5px;top:196px;font-size:12px;line-height:12px;color:#999;transform-origin:0 0;transform:rotate(90deg)">胡萝卜月</div><div class="t" style="left:219.6px;top:196px;font-size:12px;line-height:12px;color:#999;transform-origin:0 0;transform:rotate(90deg)">奶茶月</div><div class="t" style="left:236.6px;top:196px;font-size:12px;line-height:12px;color:#999;transform-origin:0 0;transform:rotate(90deg)">大豆月</div><div class="t" style="left:253.7px;top:196px;font-size:12px;line-height:12px;color:#999;transform-origin:0 0;transform:rotate(90deg)">青椒月</div><div class="t" style="left:270.8px;top:196px;font-size:12px;line-height:12px;color:#999;transform-origin:0 0;transform:rotate(90deg)">果汁月</div><div class="t" style="left:287.9px;top:196px;font-size:12px;line-height:12px;color:#999;transform-origin:0 0;transform:rotate(90deg)">小米月</div><div class="t" style="left:305.0px;top:196px;font-size:12px;line-height:12px;color:#999;transform-origin:0 0;transform:rotate(90deg)">黄瓜月</div><div class="t" style="left:322.0px;top:196px;font-size:12px;line-height:12px;color:#999;transform-origin:0 0;transform:rotate(90deg)">碳酸饮料月</div><div class="t" style="left:339.1px;top:196px;font-size:12px;line-height:12px;color:#999;transform-origin:0 0;transform:rotate(90deg)">绿豆月</div><div class="t" style="left:356.2px;top:196px;font-size:12px;line-height:12px;color:#999;transform-origin:0 0;transform:rotate(90deg)">精品有机红薯月</div><div class="t" style="left:373.3px;top:196px;font-size:12px;line-height:12px;color:#999;transform-origin:0 0;transform:rotate(90deg)">黄心土豆月</div><div class="t" style="left:390.4px;top:196px;font-size:12px;line-height:12px;color:#999;transform-origin:0 0;transform:rotate(90deg)">现磨咖啡月</div><div class="t" style="left:407.4px;top:196px;font-size:12px;line-height:12px;color:#999;transform-origin:0 0;transform:rotate(90deg)">花生米月</div><div class="t" style="left:424.5px;top:196px;font-size:12px;line-height:12px;color:#999;transform-origin:0 0;transform:rotate(90deg)">西兰花月</div><div class="t" style="left:441.6px;top:196px;font-size:12px;line-height:12px;color:#999;transform-origin:0 0;transform:rotate(90deg)">冰红茶月</div><div class="t" style="left:458.7px;top:196px;font-size:12px;line-height:12px;color:#999;transform-origin:0 0;transform:rotate(90deg)">黄玉米月</div><div class="t" style="left:475.8px;top:196px;font-size:12px;line-height:12px;color:#999;transform-origin:0 0;transform:rotate(90deg)">新鲜西红柿月</div><div class="t" style="left:492.8px;top:196px;font-size:12px;line-height:12px;color:#999;transform-origin:0 0;transform:rotate(90deg)">瓶装矿泉水月</div><div class="t" style="left:509.9px;top:196px;font-size:12px;line-height:12px;color:#999;transform-origin:0 0;transform:rotate(90deg)">东北大米月</div>
</div>
<div class="card" style="left:271px;top:380px;width:257px;height:440px">
<div class="ch"></div><svg class="a" style="left:11px;top:14px" width="20" height="20" viewBox="0 0 20 20"><rect x="1.2" y="3" width="12.8" height="11.8" rx="0.8" fill="#1a7cff"/><rect x="2.10" y="6.00" width="1.9" height="1.9" fill="#f8f9fb"/><rect x="2.10" y="9.05" width="1.9" height="1.9" fill="#f8f9fb"/><rect x="2.10" y="12.10" width="1.9" height="1.9" fill="#f8f9fb"/><rect x="5.05" y="6.00" width="1.9" height="1.9" fill="#f8f9fb"/><rect x="5.05" y="9.05" width="1.9" height="1.9" fill="#f8f9fb"/><rect x="5.05" y="12.10" width="1.9" height="1.9" fill="#f8f9fb"/><rect x="8.00" y="6.00" width="1.9" height="1.9" fill="#f8f9fb"/><rect x="8.00" y="9.05" width="1.9" height="1.9" fill="#f8f9fb"/><rect x="8.00" y="12.10" width="1.9" height="1.9" fill="#f8f9fb"/><rect x="10.95" y="6.00" width="1.9" height="1.9" fill="#f8f9fb"/><rect x="10.95" y="9.05" width="1.9" height="1.9" fill="#f8f9fb"/><rect x="10.95" y="12.10" width="1.9" height="1.9" fill="#f8f9fb"/><rect x="3.6" y="1" width="2.2" height="3.8" rx="1" fill="#1a7cff"/><rect x="9.5" y="1" width="2.2" height="3.8" rx="1" fill="#1a7cff"/><line x1="4.7" y1="2" x2="4.7" y2="4.2" stroke="#f8f9fb" stroke-width="0.7"/><line x1="10.6" y1="2" x2="10.6" y2="4.2" stroke="#f8f9fb" stroke-width="0.7"/></svg><div class="ct" style="left:32px">日历时间</div>
<div class="a" style="left:0;top:90px;width:257px;height:1px;background:#ebeef5"></div><svg class="a" style="left:20px;top:63px" width="18" height="14" viewBox="0 0 18 14"><path d="M8 1 L2 7 L8 13 M15 1 L9 7 L15 13" fill="none" stroke="#909399" stroke-width="1.6"/></svg><svg class="a" style="left:54px;top:63px" width="10" height="14" viewBox="0 0 10 14"><path d="M8 1.5 L2.5 7 L8 12.5" fill="none" stroke="#909399" stroke-width="1.5"/></svg><div class="t" style="left:80px;top:63px;font-size:14px;line-height:14px;color:#909399">2026 年</div><div class="t" style="left:151px;top:63px;font-size:14px;line-height:14px;color:#909399">4 月</div><svg class="a" style="left:193px;top:63px" width="10" height="14" viewBox="0 0 10 14"><path d="M2 1.5 L7.5 7 L2 12.5" fill="none" stroke="#909399" stroke-width="1.5"/></svg><svg class="a" style="left:219px;top:63px" width="18" height="14" viewBox="0 0 18 14"><path d="M3 1 L9 7 L3 13 M10 1 L16 7 L10 13" fill="none" stroke="#909399" stroke-width="1.6"/></svg><div class="t" style="left:11.5px;width:30px;text-align:center;top:108px;font-size:14px;line-height:16px;color:#303133">日</div><div class="t" style="left:45.5px;width:30px;text-align:center;top:108px;font-size:14px;line-height:16px;color:#303133">一</div><div class="t" style="left:79.5px;width:30px;text-align:center;top:108px;font-size:14px;line-height:16px;color:#303133">二</div><div class="t" style="left:113.5px;width:30px;text-align:center;top:108px;font-size:14px;line-height:16px;color:#303133">三</div><div class="t" style="left:147.5px;width:30px;text-align:center;top:108px;font-size:14px;line-height:16px;color:#303133">四</div><div class="t" style="left:181.5px;width:30px;text-align:center;top:108px;font-size:14px;line-height:16px;color:#303133">五</div><div class="t" style="left:215.5px;width:30px;text-align:center;top:108px;font-size:14px;line-height:16px;color:#303133">六</div><div class="t" style="left:9.5px;width:34px;text-align:center;top:138px;font-size:15px;line-height:18px;color:#c0c4cc">29</div><div class="t" style="left:43.5px;width:34px;text-align:center;top:138px;font-size:15px;line-height:18px;color:#c0c4cc">30</div><div class="t" style="left:77.5px;width:34px;text-align:center;top:138px;font-size:15px;line-height:18px;color:#c0c4cc">31</div><div class="t" style="left:111.5px;width:34px;text-align:center;top:138px;font-size:12px;line-height:18px;color:#606266">愚人</div><div class="t" style="left:145.5px;width:34px;text-align:center;top:138px;font-size:15px;line-height:18px;color:#65686e">2</div><div class="t" style="left:179.5px;width:34px;text-align:center;top:138px;font-size:15px;line-height:18px;color:#65686e">3</div><div class="t" style="left:213.5px;width:34px;text-align:center;top:138px;font-size:15px;line-height:18px;color:#65686e">4</div><div class="t" style="left:9.5px;width:34px;text-align:center;top:170px;font-size:15px;line-height:18px;color:#65686e">5</div><div class="t" style="left:43.5px;width:34px;text-align:center;top:170px;font-size:15px;line-height:18px;color:#65686e">6</div><div class="t" style="left:77.5px;width:34px;text-align:center;top:170px;font-size:15px;line-height:18px;color:#65686e">7</div><div class="t" style="left:111.5px;width:34px;text-align:center;top:170px;font-size:15px;line-height:18px;color:#65686e">8</div><div class="t" style="left:145.5px;width:34px;text-align:center;top:170px;font-size:15px;line-height:18px;color:#65686e">9</div><div class="t" style="left:179.5px;width:34px;text-align:center;top:170px;font-size:15px;line-height:18px;color:#65686e">10</div><div class="t" style="left:213.5px;width:34px;text-align:center;top:170px;font-size:15px;line-height:18px;color:#65686e">11</div><div class="t" style="left:9.5px;width:34px;text-align:center;top:202px;font-size:15px;line-height:18px;color:#65686e">12</div><div class="t" style="left:43.5px;width:34px;text-align:center;top:202px;font-size:15px;line-height:18px;color:#65686e">13</div><div class="t" style="left:77.5px;width:34px;text-align:center;top:202px;font-size:15px;line-height:18px;color:#65686e">14</div><div class="t" style="left:111.5px;width:34px;text-align:center;top:202px;font-size:15px;line-height:18px;color:#65686e">15</div><div class="t" style="left:145.5px;width:34px;text-align:center;top:202px;font-size:15px;line-height:18px;color:#65686e">16</div><div class="t" style="left:179.5px;width:34px;text-align:center;top:202px;font-size:15px;line-height:18px;color:#65686e">17</div><div class="t" style="left:213.5px;width:34px;text-align:center;top:202px;font-size:15px;line-height:18px;color:#65686e">18</div><div class="t" style="left:9.5px;width:34px;text-align:center;top:234px;font-size:15px;line-height:18px;color:#65686e">19</div><div class="t" style="left:43.5px;width:34px;text-align:center;top:234px;font-size:15px;line-height:18px;color:#65686e">20</div><div class="t" style="left:77.5px;width:34px;text-align:center;top:234px;font-size:15px;line-height:18px;color:#65686e">21</div><div class="t" style="left:111.5px;width:34px;text-align:center;top:234px;font-size:15px;line-height:18px;color:#65686e">22</div><div class="t" style="left:145.5px;width:34px;text-align:center;top:234px;font-size:15px;line-height:18px;color:#65686e">23</div><div class="a" style="left:179px;top:227.5px;width:34px;height:32px;background:#a3262a"></div><div class="t" style="left:179.5px;width:34px;text-align:center;top:234px;font-size:15px;line-height:18px;color:#fff">24</div><div class="t" style="left:213.5px;width:34px;text-align:center;top:234px;font-size:15px;line-height:18px;color:#65686e">25</div><div class="t" style="left:9.5px;width:34px;text-align:center;top:266px;font-size:15px;line-height:18px;color:#65686e">26</div><div class="t" style="left:43.5px;width:34px;text-align:center;top:266px;font-size:15px;line-height:18px;color:#65686e">27</div><div class="t" style="left:77.5px;width:34px;text-align:center;top:266px;font-size:15px;line-height:18px;color:#65686e">28</div><div class="t" style="left:111.5px;width:34px;text-align:center;top:266px;font-size:15px;line-height:18px;color:#65686e">29</div><div class="t" style="left:145.5px;width:34px;text-align:center;top:266px;font-size:15px;line-height:18px;color:#65686e">30</div><div class="t" style="left:179.5px;width:34px;text-align:center;top:266px;font-size:12px;line-height:18px;color:#c0c4cc">劳动</div><div class="t" style="left:213.5px;width:34px;text-align:center;top:266px;font-size:15px;line-height:18px;color:#c0c4cc">2</div><div class="t" style="left:9.5px;width:34px;text-align:center;top:298px;font-size:15px;line-height:18px;color:#c0c4cc">3</div><div class="t" style="left:43.5px;width:34px;text-align:center;top:298px;font-size:12px;line-height:18px;color:#c0c4cc">青年</div><div class="t" style="left:77.5px;width:34px;text-align:center;top:298px;font-size:15px;line-height:18px;color:#c0c4cc">5</div><div class="t" style="left:111.5px;width:34px;text-align:center;top:298px;font-size:15px;line-height:18px;color:#c0c4cc">6</div><div class="t" style="left:145.5px;width:34px;text-align:center;top:298px;font-size:15px;line-height:18px;color:#c0c4cc">7</div><div class="t" style="left:179.5px;width:34px;text-align:center;top:298px;font-size:15px;line-height:18px;color:#c0c4cc">8</div><div class="t" style="left:213.5px;width:34px;text-align:center;top:298px;font-size:15px;line-height:18px;color:#c0c4cc">9</div><div class="a" style="left:138.0px;top:132.5px;width:5px;height:5px;border-radius:50%;background:#3c82f0"></div><div class="a" style="left:206.5px;top:260.5px;width:5px;height:5px;border-radius:50%;background:#3c82f0"></div><div class="a" style="left:71.0px;top:293.0px;width:5px;height:5px;border-radius:50%;background:#3c82f0"></div>
</div>
<div class="card" style="left:544px;top:380px;width:257px;height:212px">
<div class="ch"></div><svg class="a" style="left:11px;top:15px" width="20" height="20" viewBox="0 0 20 20"><rect x="3.7" y="1.4" width="12.8" height="9.8" rx="0.8" fill="none" stroke="#1a7cff" stroke-width="1"/><path d="M3.7 2.5 H1.7 V10.4 Q1.7 11.2 2.6 11.2" fill="none" stroke="#1a7cff" stroke-width="1"/><rect x="5.7" y="3.5" width="3.8" height="3.8" fill="none" stroke="#1a7cff" stroke-width="1"/><g stroke="#1a7cff" stroke-width="1" stroke-linecap="round"><line x1="11.4" y1="3.4" x2="14.7" y2="3.4"/><line x1="11.4" y1="5.4" x2="14.7" y2="5.4"/><line x1="11.4" y1="7.5" x2="14.7" y2="7.5"/><line x1="5.6" y1="9.5" x2="9.6" y2="9.5"/><line x1="11.4" y1="9.5" x2="14.7" y2="9.5"/></g></svg><div class="ct" style="left:36px">数据卡片</div>
<div class="t" style="left:0;width:257px;text-align:center;top:87px;font-size:33px;line-height:36px;font-weight:bold;color:#1e80ff">135</div><div class="t" style="left:0;width:257px;text-align:center;top:129px;font-size:14px;line-height:16px;color:#606266">数据指标</div><svg class="a" style="left:105.5px;top:156.5px" width="11" height="11" viewBox="0 0 11 11"><path d="M1 5.8 L5.5 1.3 L10 5.8 M5.5 1.5 V10.5" fill="none" stroke="#1cbd5c" stroke-width="2.2" stroke-linecap="round" stroke-linejoin="round"/></svg><div class="t" style="left:121px;top:155.5px;font-size:12px;line-height:15px;color:#1cbd5c">1.7 %</div>
</div>
<div class="card" style="left:544px;top:608px;width:257px;height:212px">
<div class="ch"></div><svg class="a" style="left:11px;top:15px" width="20" height="20" viewBox="0 0 20 20"><rect x="3.7" y="1.4" width="12.8" height="9.8" rx="0.8" fill="none" stroke="#1a7cff" stroke-width="1"/><path d="M3.7 2.5 H1.7 V10.4 Q1.7 11.2 2.6 11.2" fill="none" stroke="#1a7cff" stroke-width="1"/><rect x="5.7" y="3.5" width="3.8" height="3.8" fill="none" stroke="#1a7cff" stroke-width="1"/><g stroke="#1a7cff" stroke-width="1" stroke-linecap="round"><line x1="11.4" y1="3.4" x2="14.7" y2="3.4"/><line x1="11.4" y1="5.4" x2="14.7" y2="5.4"/><line x1="11.4" y1="7.5" x2="14.7" y2="7.5"/><line x1="5.6" y1="9.5" x2="9.6" y2="9.5"/><line x1="11.4" y1="9.5" x2="14.7" y2="9.5"/></g></svg><div class="ct" style="left:36px">数据卡片</div>
<div class="t" style="left:0;width:257px;text-align:center;top:87px;font-size:33px;line-height:36px;font-weight:bold;color:#1e80ff">166</div><div class="t" style="left:0;width:257px;text-align:center;top:129px;font-size:14px;line-height:16px;color:#606266">数据指标</div><svg class="a" style="left:105.5px;top:156.5px" width="11" height="11" viewBox="0 0 11 11"><path d="M1 5.2 L5.5 9.7 L10 5.2 M5.5 9.5 V0.5" fill="none" stroke="#e8383d" stroke-width="2.2" stroke-linecap="round" stroke-linejoin="round"/></svg><div class="t" style="left:121px;top:155.5px;font-size:12px;line-height:15px;color:#e8383d">8.7 %</div>
</div>
<div class="card" style="left:1361px;top:380px;width:529px;height:288px">
<div class="ch"></div><svg class="a" style="left:12px;top:16px" width="20" height="20" viewBox="0 0 20 20"><path d="M0.6 0.4 V11.4 H15.9" fill="none" stroke="#1a7cff" stroke-width="1.1" stroke-linecap="round"/><path d="M2.7 9.2 L6.4 4.8 L8.5 7.9 L13.6 2.2" fill="none" stroke="#1a7cff" stroke-width="1.9" stroke-linejoin="miter"/><path d="M11.3 1 H15.1 V4.8 Z" fill="#1a7cff"/></svg><div class="ct" style="left:36px">折线图</div>
<div class="t" style="left:16px;top:61px;font-size:16px;line-height:18px;font-weight:bold;color:#464a55">北京上海温度趋势上半年对比</div><svg class="a" style="left:15.5px;top:105.39999999999998px" width="8" height="6" viewBox="0 0 8 6"><path d="M0.5 2.5 Q2 0.8 4 3 Q6 5.2 7.5 3.5" fill="none" stroke="#2b7ff5" stroke-width="1.2"/></svg><div class="t" style="left:31.5px;top:101.39999999999998px;font-size:12px;line-height:14px;color:#333">北京</div><svg class="a" style="left:69px;top:105.39999999999998px" width="8" height="6" viewBox="0 0 8 6"><path d="M0.5 2.5 Q2 0.8 4 3 Q6 5.2 7.5 3.5" fill="none" stroke="#14c4c4" stroke-width="1.2"/></svg><div class="t" style="left:85px;top:101.39999999999998px;font-size:12px;line-height:14px;color:#333">上海</div><svg class="a" style="left:0;top:0" width="529" height="288" viewBox="0 0 529 288"><line x1="81" y1="128.5" x2="511" y2="128.5" stroke="#efefef" stroke-dasharray="3 4"/><line x1="76" y1="128.5" x2="80" y2="128.5" stroke="#6e7079"/><line x1="81" y1="143.5" x2="511" y2="143.5" stroke="#efefef" stroke-dasharray="3 4"/><line x1="76" y1="143.5" x2="80" y2="143.5" stroke="#6e7079"/><line x1="81" y1="158.6" x2="511" y2="158.6" stroke="#efefef" stroke-dasharray="3 4"/><line x1="76" y1="158.6" x2="80" y2="158.6" stroke="#6e7079"/><line x1="81" y1="173.6" x2="511" y2="173.6" stroke="#efefef" stroke-dasharray="3 4"/><line x1="76" y1="173.6" x2="80" y2="173.6" stroke="#6e7079"/><line x1="81" y1="188.6" x2="511" y2="188.6" stroke="#efefef" stroke-dasharray="3 4"/><line x1="76" y1="188.6" x2="80" y2="188.6" stroke="#6e7079"/><line x1="81" y1="203.6" x2="511" y2="203.6" stroke="#efefef" stroke-dasharray="3 4"/><line x1="76" y1="203.6" x2="80" y2="203.6" stroke="#6e7079"/><line x1="81" y1="218.7" x2="511" y2="218.7" stroke="#efefef" stroke-dasharray="3 4"/><line x1="76" y1="218.7" x2="80" y2="218.7" stroke="#6e7079"/><line x1="115.79999999999995" y1="221" x2="115.79999999999995" y2="225" stroke="#6e7079"/><line x1="188" y1="221" x2="188" y2="225" stroke="#6e7079"/><line x1="260.5" y1="221" x2="260.5" y2="225" stroke="#6e7079"/><line x1="332.70000000000005" y1="221" x2="332.70000000000005" y2="225" stroke="#6e7079"/><line x1="404.79999999999995" y1="221" x2="404.79999999999995" y2="225" stroke="#6e7079"/><line x1="476.5999999999999" y1="221" x2="476.5999999999999" y2="225" stroke="#6e7079"/><path d="M115.8 197.6 C128.8 196.7 162.0 196.4 188.0 192.5 C214.0 188.6 234.5 182.2 260.5 176.2 C286.5 170.2 306.7 165.1 332.7 159.2 C358.7 153.3 378.9 148.8 404.8 143.5 C430.7 138.2 463.7 132.3 476.6 129.9" fill="none" stroke="#14c4c4" stroke-width="1.5"/><circle cx="115.8" cy="197.6" r="3.6" fill="#14c4c4"/><circle cx="188.0" cy="192.5" r="3.6" fill="#14c4c4"/><circle cx="260.5" cy="176.2" r="3.6" fill="#14c4c4"/><circle cx="332.7" cy="159.2" r="3.6" fill="#14c4c4"/><circle cx="404.8" cy="143.5" r="3.6" fill="#14c4c4"/><circle cx="476.6" cy="129.9" r="3.6" fill="#14c4c4"/><path d="M115.8 218.7 C128.8 217.4 162.0 217.0 188.0 211.6 C214.0 206.2 234.5 197.3 260.5 188.8 C286.5 180.3 306.7 172.0 332.7 164.3 C358.7 156.6 378.9 151.5 404.8 145.9 C430.7 140.3 463.7 135.3 476.6 133.0" fill="none" stroke="#2b7ff5" stroke-width="1.5"/><circle cx="115.8" cy="218.7" r="3.6" fill="#2b7ff5"/><circle cx="188.0" cy="211.6" r="3.6" fill="#2b7ff5"/><circle cx="260.5" cy="188.8" r="3.6" fill="#2b7ff5"/><circle cx="332.7" cy="164.3" r="3.6" fill="#2b7ff5"/><circle cx="404.8" cy="145.9" r="3.6" fill="#2b7ff5"/><circle cx="476.6" cy="133.0" r="3.6" fill="#2b7ff5"/></svg><div class="t" style="right:457px;top:121.5px;font-size:12px;line-height:14px;color:#999">25°C</div><div class="t" style="right:457px;top:136.5px;font-size:12px;line-height:14px;color:#999">20°C</div><div class="t" style="right:457px;top:151.6px;font-size:12px;line-height:14px;color:#999">15°C</div><div class="t" style="right:457px;top:166.6px;font-size:12px;line-height:14px;color:#999">10°C</div><div class="t" style="right:457px;top:181.6px;font-size:12px;line-height:14px;color:#999">5°C</div><div class="t" style="right:457px;top:196.6px;font-size:12px;line-height:14px;color:#999">0°C</div><div class="t" style="right:457px;top:211.7px;font-size:12px;line-height:14px;color:#999">-5°C</div><div class="t" style="left:95.79999999999995px;width:40px;text-align:center;top:227.39999999999998px;font-size:12px;line-height:14px;color:#999">一月</div><div class="t" style="left:168px;width:40px;text-align:center;top:227.39999999999998px;font-size:12px;line-height:14px;color:#999">二月</div><div class="t" style="left:240.5px;width:40px;text-align:center;top:227.39999999999998px;font-size:12px;line-height:14px;color:#999">三月</div><div class="t" style="left:312.70000000000005px;width:40px;text-align:center;top:227.39999999999998px;font-size:12px;line-height:14px;color:#999">四月</div><div class="t" style="left:384.79999999999995px;width:40px;text-align:center;top:227.39999999999998px;font-size:12px;line-height:14px;color:#999">五月</div><div class="t" style="left:456.5999999999999px;width:40px;text-align:center;top:227.39999999999998px;font-size:12px;line-height:14px;color:#999">六月</div><div class="t" style="left:277px;width:40px;text-align:center;top:255.29999999999995px;font-size:12px;line-height:14px;color:#333">月份</div><div class="t" style="left:2px;width:30px;text-align:center;top:168.5px;font-size:12px;line-height:14px;color:#333;transform:rotate(-90deg)">温度</div>
</div>
<div class="card" style="left:1361px;top:684px;width:529px;height:320px">
<div class="ch"></div><svg class="a" style="left:11px;top:15px" width="20" height="20" viewBox="0 0 20 20"><circle cx="7.1" cy="6.9" r="5.2" fill="none" stroke="#1a7cff" stroke-width="1.6"/><circle cx="7.1" cy="6.9" r="1.9" fill="#1a7cff"/></svg><div class="ct" style="left:32.7px">散点图</div>
<div class="t" style="left:16px;top:61px;font-size:16px;line-height:18px;font-weight:bold;color:#464a55">身高体重分布散点图</div><svg class="a" style="left:15px;top:104.29999999999995px" width="10" height="10" viewBox="0 0 10 10"><circle cx="5" cy="5" r="3.8" fill="none" stroke="#2b7ff5" stroke-width="1.2" opacity="0.8"/></svg><div class="t" style="left:32px;top:102.29999999999995px;font-size:12px;line-height:14px;color:#333">男</div><svg class="a" style="left:56px;top:104.29999999999995px" width="10" height="10" viewBox="0 0 10 10"><circle cx="5" cy="5" r="3.8" fill="none" stroke="#14c4c4" stroke-width="1.2" opacity="0.8"/></svg><div class="t" style="left:73px;top:102.29999999999995px;font-size:12px;line-height:14px;color:#333">女</div><svg class="a" style="left:0;top:0" width="529" height="300" viewBox="0 0 529 300"><line x1="74" y1="129" x2="514" y2="129" stroke="#f0f0f0" stroke-dasharray="3 4"/><line x1="69" y1="129" x2="74" y2="129" stroke="#6e7079"/><line x1="74" y1="144" x2="514" y2="144" stroke="#f0f0f0" stroke-dasharray="3 4"/><line x1="69" y1="144" x2="74" y2="144" stroke="#6e7079"/><line x1="74" y1="159" x2="514" y2="159" stroke="#f0f0f0" stroke-dasharray="3 4"/><line x1="69" y1="159" x2="74" y2="159" stroke="#6e7079"/><line x1="74" y1="174" x2="514" y2="174" stroke="#f0f0f0" stroke-dasharray="3 4"/><line x1="69" y1="174" x2="74" y2="174" stroke="#6e7079"/><line x1="74" y1="189" x2="514" y2="189" stroke="#f0f0f0" stroke-dasharray="3 4"/><line x1="69" y1="189" x2="74" y2="189" stroke="#6e7079"/><line x1="74" y1="204" x2="514" y2="204" stroke="#f0f0f0" stroke-dasharray="3 4"/><line x1="69" y1="204" x2="74" y2="204" stroke="#6e7079"/><line x1="136.70000000000005" y1="129" x2="136.70000000000005" y2="300" stroke="#f0f0f0" stroke-dasharray="3 4"/><line x1="199.4000000000001" y1="129" x2="199.4000000000001" y2="300" stroke="#f0f0f0" stroke-dasharray="3 4"/><line x1="262.4000000000001" y1="129" x2="262.4000000000001" y2="300" stroke="#f0f0f0" stroke-dasharray="3 4"/><line x1="325" y1="129" x2="325" y2="300" stroke="#f0f0f0" stroke-dasharray="3 4"/><line x1="387.5" y1="129" x2="387.5" y2="300" stroke="#f0f0f0" stroke-dasharray="3 4"/><line x1="450" y1="129" x2="450" y2="300" stroke="#f0f0f0" stroke-dasharray="3 4"/><line x1="513.4000000000001" y1="129" x2="513.4000000000001" y2="300" stroke="#f0f0f0" stroke-dasharray="3 4"/><line x1="74" y1="129" x2="74" y2="300" stroke="#f0f0f0" stroke-dasharray="3 4"/><circle cx="139.0" cy="167.8" r="3.4" fill="none" stroke="#14c4c4" stroke-width="1.2" opacity="0.85"/><circle cx="211.8" cy="175.8" r="3.4" fill="none" stroke="#14c4c4" stroke-width="1.2" opacity="0.85"/><circle cx="231.0" cy="191.8" r="3.4" fill="none" stroke="#14c4c4" stroke-width="1.2" opacity="0.85"/><circle cx="262.0" cy="191.8" r="3.4" fill="none" stroke="#14c4c4" stroke-width="1.2" opacity="0.85"/><circle cx="273.0" cy="197.8" r="3.4" fill="none" stroke="#14c4c4" stroke-width="1.2" opacity="0.85"/><circle cx="295.6" cy="187.5" r="3.4" fill="none" stroke="#14c4c4" stroke-width="1.2" opacity="0.85"/><circle cx="298.6" cy="186.8" r="3.4" fill="none" stroke="#14c4c4" stroke-width="1.2" opacity="0.85"/><circle cx="293.0" cy="197.8" r="3.4" fill="none" stroke="#14c4c4" stroke-width="1.2" opacity="0.85"/><circle cx="327.4" cy="193.8" r="3.4" fill="none" stroke="#14c4c4" stroke-width="1.2" opacity="0.85"/><circle cx="339.8" cy="180.4" r="3.4" fill="none" stroke="#14c4c4" stroke-width="1.2" opacity="0.85"/><circle cx="343.6" cy="170.4" r="3.4" fill="none" stroke="#14c4c4" stroke-width="1.2" opacity="0.85"/><circle cx="130.0" cy="197.8" r="3.4" fill="none" stroke="#14c4c4" stroke-width="1.2" opacity="0.85"/><circle cx="231.8" cy="166.0" r="3.4" fill="none" stroke="#2b7ff5" stroke-width="1.2" opacity="0.85"/><circle cx="264.0" cy="187.2" r="3.4" fill="none" stroke="#2b7ff5" stroke-width="1.2" opacity="0.85"/><circle cx="347.0" cy="156.6" r="3.4" fill="none" stroke="#2b7ff5" stroke-width="1.2" opacity="0.85"/><circle cx="359.8" cy="154.5" r="3.4" fill="none" stroke="#2b7ff5" stroke-width="1.2" opacity="0.85"/><circle cx="376.0" cy="146.8" r="3.4" fill="none" stroke="#2b7ff5" stroke-width="1.2" opacity="0.85"/><circle cx="376.0" cy="161.8" r="3.4" fill="none" stroke="#2b7ff5" stroke-width="1.2" opacity="0.85"/><circle cx="391.3" cy="155.8" r="3.4" fill="none" stroke="#2b7ff5" stroke-width="1.2" opacity="0.85"/><circle cx="391.3" cy="170.8" r="3.4" fill="none" stroke="#2b7ff5" stroke-width="1.2" opacity="0.85"/><circle cx="425.0" cy="143.8" r="3.4" fill="none" stroke="#2b7ff5" stroke-width="1.2" opacity="0.85"/><circle cx="425.0" cy="181.6" r="3.4" fill="none" stroke="#2b7ff5" stroke-width="1.2" opacity="0.85"/><circle cx="506.6" cy="132.8" r="3.4" fill="none" stroke="#2b7ff5" stroke-width="1.2" opacity="0.85"/></svg><div class="t" style="right:463px;top:122px;font-size:12px;line-height:14px;color:#999">100</div><div class="t" style="right:463px;top:137px;font-size:12px;line-height:14px;color:#999">90</div><div class="t" style="right:463px;top:152px;font-size:12px;line-height:14px;color:#999">80</div><div class="t" style="right:463px;top:167px;font-size:12px;line-height:14px;color:#999">70</div><div class="t" style="right:463px;top:182px;font-size:12px;line-height:14px;color:#999">60</div><div class="t" style="left:-7.5px;width:50px;text-align:center;top:169px;font-size:12px;line-height:14px;color:#333;transform:rotate(-90deg)">体重(kg)</div>
</div>
<div class="card" style="left:271px;top:836px;width:529px;height:200px">
<div class="ch"></div><svg class="a" style="left:12px;top:16px" width="20" height="20" viewBox="0 0 20 20"><path d="M0.6 0.4 V11.4 H15.9" fill="none" stroke="#1a7cff" stroke-width="1.1" stroke-linecap="round"/><rect x="3.0999999999999996" y="6.1" width="2" height="3.700000000000001" rx="0.5" fill="#1a7cff"/><rect x="6.1" y="2.3" width="2" height="7.500000000000001" rx="0.5" fill="#1a7cff"/><rect x="9.1" y="4.2" width="2" height="5.6000000000000005" rx="0.5" fill="#1a7cff"/><rect x="12" y="1.3" width="2" height="8.5" rx="0.5" fill="#1a7cff"/></svg><div class="ct" style="left:36px">柱状图</div>

</div>
<div class="card" style="left:816px;top:456px;width:529px;height:500px">
<div class="ch"></div><svg class="a" style="left:11px;top:15px" width="20" height="20" viewBox="0 0 20 20"><circle cx="7.1" cy="7" r="6.1" fill="#1a7cff"/><path d="M2.6 3.6 Q4.6 2.2 7.3 2.7 L10.6 3.6 Q9.6 5 8.6 5.5 Q7.9 7 7.3 8.6 Q5.6 7.2 4.9 5.6 Q3.4 4.7 2.6 3.6 Z" fill="#fff"/><circle cx="8.1" cy="3.5" r="0.8" fill="#1a7cff"/><path d="M8.6 10.6 Q10 9.6 11 10.1 Q10.2 11.6 9 11.9 Z" fill="#fff"/></svg><div class="ct" style="left:31.5px">地图</div>
<svg class="a" style="left:0;top:0" width="529" height="500" viewBox="816 456 529 500"><path d="M1083.1 518.8 L1085.9 519.4 L1088.7 520.0 L1090.8 522.3 L1093.5 522.9 L1096.2 520.5 L1099.8 520.0 L1102.7 519.6 L1105.6 518.7 L1108.3 517.4 L1111.5 518.0 L1114.4 517.5 L1117.5 518.7 L1119.1 521.6 L1122.0 522.9 L1123.6 525.9 L1123.9 528.6 L1122.4 530.9 L1120.6 533.1 L1121.7 536.1 L1120.8 538.6 L1119.4 540.9 L1120.4 543.7 L1121.0 546.7 L1123.2 549.0 L1125.0 551.4 L1126.1 554.2 L1124.9 556.9 L1127.4 559.4 L1125.4 562.1 L1127.0 564.6 L1127.5 567.2 L1127.7 569.8 L1127.3 572.4 L1126.9 575.1 L1126.8 578.2 L1129.0 580.7 L1128.7 583.9 L1129.2 586.8 L1130.2 589.7 L1132.7 591.2 L1134.7 593.3 L1137.8 594.1 L1139.4 596.7 L1142.0 595.9 L1144.5 596.5 L1146.9 598.0 L1149.4 597.6 L1151.9 598.0 L1154.8 598.2 L1157.4 599.6 L1160.3 600.1 L1161.2 597.6 L1161.9 595.0 L1164.1 593.1 L1164.9 590.6 L1164.9 587.7 L1166.5 585.5 L1169.2 584.6 L1171.7 583.5 L1174.7 583.3 L1176.9 581.3 L1179.5 581.2 L1181.6 579.4 L1184.6 580.4 L1186.4 577.6 L1189.0 577.6 L1191.5 577.1 L1192.8 580.3 L1195.9 582.2 L1196.9 585.5 L1197.1 588.0 L1198.5 590.4 L1197.0 593.0 L1196.9 595.5 L1197.8 598.0 L1199.1 600.6 L1199.9 603.5 L1202.7 605.3 L1203.4 608.3 L1205.3 610.5 L1208.0 610.5 L1210.6 610.2 L1213.3 609.6 L1216.0 610.4 L1218.6 609.3 L1221.7 609.0 L1223.8 606.7 L1226.6 605.9 L1229.1 604.3 L1231.5 602.2 L1234.8 602.9 L1237.6 601.8 L1240.7 601.7 L1243.1 599.5 L1245.7 600.6 L1248.4 600.0 L1251.5 602.5 L1253.5 604.7 L1254.5 607.4 L1255.8 610.1 L1256.1 613.2 L1257.5 615.8 L1256.3 620.6 L1258.9 622.9 L1259.2 626.4 L1258.0 629.3 L1256.6 632.0 L1252.7 630.8 L1249.5 631.6 L1246.2 630.6 L1246.5 633.5 L1244.9 635.9 L1245.4 638.8 L1243.6 641.2 L1239.2 642.6 L1241.4 646.1 L1244.1 646.8 L1246.9 645.3 L1249.6 645.6 L1252.3 646.1 L1255.0 646.4 L1253.6 643.6 L1250.7 643.5 L1248.7 646.3 L1245.7 646.1 L1243.0 646.8 L1240.2 647.1 L1237.5 647.8 L1234.7 647.4 L1232.3 648.2 L1229.9 649.6 L1227.8 651.8 L1227.3 654.8 L1230.8 655.0 L1234.0 656.3 L1232.6 659.3 L1230.0 659.7 L1227.3 659.8 L1224.1 660.3 L1220.8 659.0 L1217.6 660.1 L1215.2 662.2 L1215.7 665.8 L1213.6 668.0 L1216.2 668.8 L1218.2 670.4 L1219.9 672.4 L1217.9 675.1 L1215.0 676.8 L1212.6 679.5 L1210.1 682.1 L1208.0 682.9 L1209.0 685.5 L1211.0 687.6 L1212.8 689.7 L1213.1 692.7 L1214.4 695.1 L1215.2 697.8 L1216.5 700.2 L1213.8 700.6 L1212.1 702.5 L1210.3 704.3 L1208.0 705.5 L1205.9 706.7 L1204.7 709.5 L1201.4 709.0 L1199.5 710.7 L1197.8 712.7 L1196.1 715.2 L1195.6 718.0 L1196.0 721.1 L1195.3 723.9 L1195.3 726.8 L1193.6 729.4 L1193.3 732.1 L1194.7 734.9 L1193.6 737.7 L1193.8 740.6 L1192.7 742.9 L1191.9 745.5 L1190.7 747.8 L1189.4 750.2 L1190.7 752.9 L1191.0 755.7 L1190.8 758.5 L1191.0 761.3 L1190.5 764.1 L1190.3 766.9 L1191.6 769.5 L1189.5 772.1 L1190.2 774.7 L1191.5 777.3 L1191.3 779.9 L1191.1 782.5 L1191.2 785.1 L1191.9 787.6 L1190.0 790.3 L1191.0 792.9 L1188.7 791.0 L1185.7 791.6 L1183.1 790.9 L1180.5 790.2 L1179.1 793.1 L1177.0 795.2 L1174.4 796.9 L1172.5 799.1 L1169.9 800.8 L1166.7 801.2 L1164.4 803.9 L1161.2 804.3 L1158.5 806.1 L1155.1 804.3 L1152.4 806.0 L1148.9 806.0 L1145.4 806.0 L1143.4 804.1 L1143.1 801.3 L1141.9 799.0 L1139.9 801.8 L1136.6 802.5 L1135.3 804.8 L1133.1 806.7 L1132.2 809.1 L1131.4 811.7 L1131.3 814.5 L1129.6 816.6 L1131.9 817.6 L1134.4 818.5 L1135.8 821.1 L1138.3 821.9 L1139.4 824.2 L1140.0 826.8 L1141.9 828.9 L1140.8 831.4 L1139.5 833.9 L1137.4 835.9 L1135.0 834.5 L1132.5 833.5 L1129.6 834.2 L1126.7 834.4 L1124.3 835.5 L1121.9 836.5 L1119.5 837.8 L1117.3 839.4 L1115.2 836.8 L1114.4 833.5 L1112.9 830.6 L1112.6 833.3 L1112.8 836.2 L1112.1 838.8 L1110.3 841.2 L1113.1 842.0 L1115.8 843.2 L1117.9 845.5 L1120.8 846.4 L1118.1 847.9 L1117.4 850.9 L1114.6 852.3 L1113.8 855.2 L1111.3 856.5 L1109.9 858.6 L1109.6 861.6 L1108.5 863.8 L1107.0 865.9 L1105.0 867.5 L1102.3 866.4 L1100.3 864.6 L1098.9 862.0 L1097.2 859.7 L1094.4 858.7 L1092.7 855.2 L1090.5 856.8 L1089.9 859.4 L1088.1 861.3 L1086.4 863.2 L1085.6 865.7 L1088.6 866.6 L1090.1 869.6 L1092.7 871.0 L1092.2 874.4 L1093.1 877.6 L1094.4 880.7 L1091.9 880.0 L1089.4 880.7 L1086.8 881.5 L1084.3 880.0 L1081.8 881.2 L1079.2 880.0 L1076.7 879.5 L1074.2 881.1 L1071.6 881.1 L1069.1 879.7 L1066.6 880.3 L1064.0 881.7 L1061.5 881.8 L1059.0 881.8 L1056.4 879.9 L1053.9 880.1 L1051.4 881.9 L1048.8 880.1 L1046.3 879.7 L1043.7 880.6 L1041.2 881.4 L1038.7 880.9 L1036.1 882.0 L1033.6 882.3 L1031.1 879.9 L1028.5 880.7 L1026.0 881.0 L1023.5 880.0 L1020.9 881.3 L1018.4 880.2 L1015.9 880.3 L1013.3 882.0 L1010.8 881.9 L1008.3 881.8 L1005.7 881.9 L1003.2 881.0 L1000.6 881.9 L998.1 881.5 L995.6 882.3 L993.0 880.3 L990.5 881.7 L988.0 881.5 L985.4 881.2 L982.9 880.4 L980.4 881.6 L977.8 880.4 L975.3 881.5 L972.8 881.4 L970.2 881.4 L967.7 882.8 L965.2 881.7 L962.6 882.4 L960.1 881.6 L958.1 879.5 L959.4 876.5 L957.2 874.5 L957.2 871.9 L957.2 869.2 L955.9 867.0 L953.9 865.5 L951.5 864.6 L949.7 862.8 L947.7 861.3 L945.9 859.4 L943.4 858.6 L940.9 857.6 L939.9 854.9 L937.6 853.7 L935.8 851.9 L935.0 849.2 L932.7 847.9 L930.9 846.1 L928.9 843.9 L927.2 841.5 L925.4 839.1 L922.6 837.8 L919.9 837.4 L917.4 836.5 L914.7 836.2 L912.1 835.7 L909.6 834.7 L906.9 834.8 L904.3 834.0 L901.7 833.6 L899.3 832.5 L897.4 830.2 L894.8 829.6 L892.6 828.0 L890.3 826.6 L887.1 827.0 L885.0 825.3 L884.3 822.8 L884.3 820.1 L883.2 817.8 L880.6 816.1 L879.6 813.7 L879.5 811.0 L878.8 808.6 L878.4 805.5 L879.5 802.9 L879.8 800.0 L882.0 797.6 L883.0 794.9 L882.9 791.9 L884.9 789.7 L884.2 786.4 L886.6 784.3 L887.5 781.6 L887.3 778.5 L890.1 776.6 L891.4 774.1 L891.3 771.1 L890.9 768.2 L893.1 765.6 L892.1 762.7 L892.6 759.9 L894.3 757.3 L893.4 754.4 L895.8 752.8 L896.2 749.6 L898.4 748.0 L900.3 746.1 L901.7 743.7 L903.8 741.9 L905.8 739.8 L908.4 738.7 L911.4 738.2 L912.9 735.2 L916.0 735.0 L918.4 733.5 L919.1 731.1 L919.0 728.3 L920.7 726.2 L922.3 724.1 L922.9 721.6 L922.7 718.8 L924.6 716.8 L925.5 714.1 L924.5 711.7 L924.6 709.1 L922.0 707.0 L922.6 704.3 L923.8 701.9 L925.1 699.4 L928.3 698.5 L929.0 695.6 L930.5 693.3 L933.0 691.8 L933.5 689.0 L935.4 686.5 L935.9 683.7 L935.1 680.6 L935.6 677.7 L937.1 675.1 L937.3 672.3 L935.7 670.1 L935.1 667.5 L932.8 665.5 L933.0 662.6 L932.8 659.6 L935.2 657.4 L935.5 654.5 L935.5 651.6 L938.5 649.6 L938.7 646.7 L939.2 643.9 L941.9 643.7 L943.6 641.1 L946.7 642.1 L948.4 639.2 L951.5 640.3 L953.5 638.4 L955.9 637.6 L958.3 636.3 L961.1 635.9 L963.9 635.9 L965.9 633.3 L968.3 632.1 L971.2 632.1 L973.5 630.5 L976.0 629.2 L978.8 629.3 L978.9 626.6 L979.5 624.1 L980.8 621.9 L982.0 619.6 L982.8 617.2 L984.8 615.2 L985.1 612.6 L983.4 610.3 L982.6 607.6 L980.6 605.5 L979.7 602.8 L978.8 600.1 L977.2 597.6 L977.4 594.8 L976.4 592.2 L977.8 589.3 L976.9 586.7 L975.5 584.1 L975.9 581.3 L978.1 580.0 L981.0 579.8 L982.2 576.7 L985.3 577.0 L987.2 575.1 L989.2 573.3 L991.4 571.7 L994.0 570.7 L995.4 568.2 L997.6 566.7 L999.3 564.6 L1001.3 562.9 L1003.6 561.3 L1004.0 558.1 L1006.0 556.3 L1008.9 555.6 L1011.2 553.9 L1013.6 552.4 L1015.8 550.4 L1018.5 549.2 L1020.5 550.8 L1022.9 552.2 L1024.5 554.3 L1026.4 556.1 L1026.9 559.2 L1029.7 560.2 L1031.0 562.6 L1033.1 560.5 L1035.5 559.1 L1038.9 559.6 L1041.4 558.4 L1043.5 556.3 L1045.8 555.3 L1047.3 553.0 L1049.4 551.6 L1051.5 550.3 L1053.9 549.3 L1056.0 548.0 L1058.3 546.1 L1061.2 545.7 L1063.6 544.3 L1066.9 544.9 L1069.5 543.9 L1071.7 541.8 L1074.0 540.0 L1076.8 539.6 L1079.7 539.0 L1080.7 536.1 L1082.9 534.6 L1085.2 533.4 L1083.5 530.6 L1084.0 527.6 L1083.9 524.6 L1083.5 521.7 L1083.1 518.8 Z" fill="#fff" stroke="#8a8a8a" stroke-width="0.9"/><path d="M978.8 629.3 L981.6 628.6 L984.2 629.5 L986.9 628.3 L989.6 629.1 L992.3 628.8 L994.9 629.7 L997.6 630.1 L1000.4 629.6 L1002.9 630.2 L1005.3 631.6 L1007.8 632.1 L1010.1 633.4 L1012.1 635.7 L1014.2 637.7 L1015.9 640.2 L1018.2 642.1 L1020.6 643.9 L1020.7 646.6 L1021.0 649.2 L1022.9 651.4 L1023.8 653.9 L1022.8 656.9 L1025.6 658.9 L1024.9 661.9 L1025.8 664.4 L1026.8 666.8 L1029.6 667.4 L1030.5 670.6 L1032.4 672.3 L1035.1 673.1 L1037.5 674.2 L1040.0 675.3 L1042.4 676.3 L1045.5 675.5 L1047.7 677.2 L1049.3 679.4 L1051.0 681.4 L1052.0 684.0 L1053.7 686.1 L1056.0 687.7 L1057.5 690.3 L1060.0 692.0 L1061.5 694.6 L1064.3 696.0 L1067.2 696.1 L1070.0 695.8 L1072.6 694.3 L1075.3 693.4 L1078.1 693.3 L1081.0 693.9 L1083.6 694.4 L1086.3 694.6 L1088.2 697.2 L1091.0 697.4 L1093.5 698.1 L1095.9 699.6 L1098.4 700.9 L1100.8 702.3 L1103.5 703.1 L1106.0 704.3 L1109.0 705.5 L1110.2 708.5" fill="none" stroke="#8a8a8a" stroke-width="0.9"/><path d="M1160.3 600.1 L1159.4 602.7 L1159.4 605.3 L1159.9 607.9 L1159.7 610.5 L1159.3 613.1 L1160.8 615.8 L1158.9 618.3 L1159.4 620.9 L1157.9 623.5 L1156.3 625.9 L1154.0 627.6 L1151.2 628.9 L1150.2 631.9 L1147.7 633.4 L1146.0 631.5 L1144.3 629.6 L1141.5 629.3 L1139.2 628.1 L1137.3 626.5 L1135.2 625.1 L1132.8 626.9 L1130.6 628.8 L1128.8 631.1 L1126.9 633.4 L1124.5 635.3 L1123.5 638.4 L1121.3 640.3 L1119.0 642.2 L1116.5 643.9 L1114.6 646.1 L1114.4 649.1 L1112.6 651.3 L1112.6 654.4 L1110.2 656.4 L1110.7 659.3 L1109.6 661.9 L1108.0 664.3 L1107.3 667.0 L1106.8 669.7 L1107.2 672.6 L1106.0 675.1 L1105.3 677.9 L1104.7 680.7 L1104.0 683.5 L1104.2 686.5 L1101.6 688.8 L1101.9 691.8 L1103.8 693.9 L1103.1 697.1 L1104.4 699.5 L1107.8 700.8 L1107.9 703.7 L1108.3 706.5 L1110.2 708.5" fill="none" stroke="#8a8a8a" stroke-width="0.9"/><path d="M918.4 733.5 L921.5 734.3 L924.2 732.6 L927.1 731.7 L930.0 731.1 L933.0 731.4 L935.0 733.6 L938.1 732.8 L940.2 734.8 L943.1 734.8 L945.1 736.7 L947.6 737.7 L948.5 740.3 L951.8 740.6 L952.3 743.6 L954.7 744.9 L955.8 747.3 L957.9 748.8 L960.1 750.2 L962.8 749.2 L965.8 750.5 L968.4 749.1 L971.1 747.6 L973.8 747.2 L976.8 748.1 L978.0 750.4 L979.4 752.6 L981.0 754.8 L982.6 756.9 L983.4 759.4 L984.7 761.7 L984.7 764.6 L987.9 765.9 L987.5 769.1 L989.3 771.1 L991.4 769.5 L991.2 766.3 L994.4 765.4 L995.3 763.0 L997.1 761.2 L997.6 758.5 L1000.2 758.4 L1002.7 759.1 L1005.2 759.5 L1007.4 761.5 L1010.1 760.6 L1012.6 762.4 L1015.5 763.5 L1018.0 765.2 L1020.6 766.9 L1023.0 768.6 L1025.6 770.2 L1027.5 772.4 L1028.3 775.8 L1031.0 777.3 L1033.5 776.8 L1036.0 778.4 L1038.5 776.7 L1041.0 776.7 L1043.5 777.3 L1046.0 776.1 L1048.1 774.1 L1050.8 773.3 L1054.0 773.4 L1056.0 771.1 L1056.6 768.4 L1056.0 765.9 L1055.1 763.5 L1055.4 760.9 L1053.9 758.5 L1056.5 757.2 L1057.5 754.5 L1059.6 752.7 L1060.0 749.5 L1063.1 748.5 L1064.3 746.0 L1067.1 745.2 L1070.1 745.3 L1072.8 744.3 L1075.3 742.7 L1078.0 741.4 L1081.0 741.9 L1083.7 742.8 L1086.2 740.5 L1088.8 741.2 L1091.4 741.0 L1093.3 743.1 L1095.0 745.3 L1095.6 748.3 L1097.7 750.2" fill="none" stroke="#8a8a8a" stroke-width="0.9"/><path d="M1031.0 777.3 L1029.3 780.1 L1030.8 783.2 L1029.3 786.0 L1029.8 789.1 L1028.9 791.9 L1027.2 793.9 L1026.0 796.2 L1024.9 798.7 L1022.6 800.3 L1022.2 803.2 L1020.8 805.8 L1017.9 807.6 L1017.6 810.7 L1015.7 812.4 L1014.2 814.7 L1011.1 815.1 L1009.0 816.7 L1008.0 819.5 L1006.0 821.1 L1004.5 823.8 L1002.4 825.8 L1000.5 828.1 L997.6 829.4 L996.1 831.5 L994.8 833.8 L992.7 835.3 L990.9 837.0 L988.6 838.2 L986.2 839.5 L985.1 842.0 L982.9 843.6 L981.8 846.3 L980.1 848.4 L978.1 850.3 L976.7 852.6 L974.7 854.5 L973.6 856.8 L972.8 859.3 L971.0 861.0 L968.1 862.1 L968.5 865.4 L966.3 867.0 L965.4 869.4 L964.2 871.7 L962.7 873.9 L963.4 877.0 L962.4 879.3 L960.9 881.6" fill="none" stroke="#8a8a8a" stroke-width="0.9"/><path d="M1017.6 810.7 L1019.6 812.9 L1020.7 815.6 L1022.0 818.1 L1022.3 821.3 L1024.7 823.2 L1024.4 826.0 L1024.8 828.6 L1027.5 830.8 L1026.8 833.6 L1029.7 833.3 L1031.6 835.8 L1034.0 837.1 L1036.8 836.9 L1039.3 837.8 L1041.8 837.8 L1044.2 836.2 L1046.8 837.0 L1049.4 838.2 L1051.8 836.9" fill="none" stroke="#8a8a8a" stroke-width="0.9"/><path d="M1101.5 763.9 L1099.6 766.0 L1098.5 768.4 L1097.2 770.8 L1097.8 774.0 L1096.2 776.2 L1097.6 778.9 L1097.8 781.7 L1097.2 784.6 L1097.1 787.5 L1097.9 790.2 L1098.8 793.3 L1101.0 795.3 L1103.2 797.2 L1106.0 798.8 L1108.8 800.2 L1112.0 800.8 L1112.7 803.7 L1113.0 806.7 L1113.8 809.5 L1116.0 807.5 L1119.3 808.5 L1121.4 806.3 L1124.3 806.0 L1127.1 805.7 L1128.9 803.7 L1130.6 801.7 L1133.1 800.8 L1135.8 799.2 L1138.8 799.0 L1141.9 799.0" fill="none" stroke="#8a8a8a" stroke-width="0.9"/><path d="M1085.2 839.9 L1087.2 838.0 L1089.1 836.0 L1089.6 833.0 L1091.3 830.8 L1093.9 829.5 L1095.6 827.4 L1098.5 828.0 L1101.5 827.9 L1104.5 827.9 L1107.3 829.3 L1110.2 829.4 L1113.6 829.7 L1116.0 831.8 L1118.5 833.6" fill="none" stroke="#8a8a8a" stroke-width="0.9"/><path d="M1150.6 787.6 L1152.7 788.1 L1154.5 789.5 L1156.8 789.4 L1158.1 791.1 L1159.4 792.9 L1161.4 793.9 L1162.9 795.5 L1165.1 796.6 L1167.1 798.0 L1168.4 800.3 L1170.8 801.1" fill="none" stroke="#8a8a8a" stroke-width="0.8"/><path d="M1177.0 802.5 L1177.9 804.5 L1179.6 805.9 L1180.5 807.8 L1183.4 808.1 L1185.7 809.9 L1187.5 808.1 L1189.3 806.4 L1187.5 804.9 L1185.4 803.9 L1183.6 802.5" fill="none" stroke="#8a8a8a" stroke-width="0.8"/><path d="M1134.8 799.9 L1137.0 800.7 L1138.6 802.3 L1140.4 803.8 L1142.7 804.3 L1144.0 806.5 L1145.2 808.7 L1145.4 811.3 L1147.6 809.9 L1150.0 808.9 L1152.4 807.8" fill="none" stroke="#8a8a8a" stroke-width="0.8"/><path d="M1128.7 816.6 L1130.8 816.6 L1132.7 815.5 L1134.8 815.7 L1137.1 814.6 L1139.1 813.1 L1141.0 811.3" fill="none" stroke="#8a8a8a" stroke-width="0.8"/><path d="M1148.9 818.3 L1150.6 817.0 L1152.4 815.7 L1151.9 818.2 L1149.9 820.1 L1149.7 822.7" fill="none" stroke="#8a8a8a" stroke-width="0.8"/><path d="M1112.0 830.6 L1112.6 832.7 L1112.2 834.9 L1113.5 836.9 L1113.8 839.0 L1113.7 841.2 L1115.9 841.6 L1118.1 840.8 L1120.3 841.9 L1122.5 841.2" fill="none" stroke="#8a8a8a" stroke-width="0.8"/><path d="M1186.0 663.6 L1188.4 662.0 L1190.8 660.5 L1193.2 658.6 L1196.0 657.7 L1197.3 659.3 L1197.9 661.3 L1198.4 663.3 L1199.5 665.0 L1197.8 666.8 L1197.4 669.3 L1199.7 667.8 L1202.3 667.5 L1203.1 665.2 L1203.7 662.8 L1205.7 660.9 L1205.9 658.4 L1208.0 656.5 L1210.6 655.7 L1210.5 658.3 L1209.7 660.6 L1208.3 662.8 L1207.6 665.0 L1206.0 666.9 L1205.1 669.1 L1204.8 671.5" fill="none" stroke="#8a8a8a" stroke-width="0.8"/><path d="M1186.9 675.1 L1188.9 674.0 L1190.9 673.1 L1192.6 671.7 L1193.9 669.8 L1196.2 670.2 L1198.4 670.6 L1200.3 672.4 L1202.7 672.4 L1205.2 671.9 L1207.1 670.0 L1209.7 669.8 L1211.8 671.3 L1214.1 672.4 L1215.7 670.1 L1217.6 668.0" fill="none" stroke="#8a8a8a" stroke-width="0.8"/><path d="M1238.7 612.7 L1240.2 615.2 L1241.3 618.0 L1242.6 616.3 L1243.9 614.7 L1245.7 613.6 L1247.7 615.4 L1248.4 618.0 L1250.9 616.8 L1253.6 616.2 L1254.7 618.3 L1255.4 620.6" fill="none" stroke="#8a8a8a" stroke-width="0.8"/><path d="M1216.7 661.0 L1218.1 662.7 L1220.6 662.7 L1221.6 664.9 L1223.8 665.4 L1225.0 663.7 L1226.7 662.6 L1228.7 661.8 L1229.9 660.1 L1230.8 663.0 L1232.6 665.4 L1232.1 667.8 L1232.1 670.3 L1230.8 672.4 L1228.5 673.6 L1226.2 674.9 L1223.8 675.9 L1221.4 676.7 L1220.1 679.0 L1218.0 680.1 L1215.9 681.2" fill="none" stroke="#8a8a8a" stroke-width="0.8"/><path d="M1186.0 679.4 L1187.9 680.6 L1190.3 679.9 L1192.2 681.2 L1194.3 680.2 L1196.7 679.9 L1198.9 679.0 L1200.9 677.7 L1203.1 676.4 L1205.4 675.8 L1208.0 675.9" fill="none" stroke="#8a8a8a" stroke-width="0.8"/><path d="M1157.0 619.7 L1160.5 618.0 L1162.3 620.6 L1158.8 621.5" fill="none" stroke="#8a8a8a" stroke-width="0.8"/><ellipse cx="1280.9" cy="640.8" rx="1.3" ry="0.8" fill="none" stroke="#8a8a8a" stroke-width="0.7"/><ellipse cx="1252.8" cy="670.3" rx="1.5" ry="1.3" fill="none" stroke="#8a8a8a" stroke-width="0.7"/><ellipse cx="1226.9" cy="686.1" rx="1.3" ry="0.8" fill="none" stroke="#8a8a8a" stroke-width="0.7"/><ellipse cx="1235.2" cy="680.3" rx="0.8" ry="2.0" fill="none" stroke="#8a8a8a" stroke-width="0.7"/><ellipse cx="1214.1" cy="680.3" rx="3.3" ry="2.3" fill="none" stroke="#8a8a8a" stroke-width="0.7"/><ellipse cx="1241.3" cy="651.3" rx="0.7" ry="0.7" fill="none" stroke="#8a8a8a" stroke-width="0.7"/><ellipse cx="1232.6" cy="656.3" rx="0.7" ry="0.7" fill="none" stroke="#8a8a8a" stroke-width="0.7"/><circle cx="1262.4" cy="698.8" r="1.3" fill="#35a0f8" stroke="#6b7f95" stroke-width="0.4"/><circle cx="1222.0" cy="710.2" r="1.3" fill="#35a0f8" stroke="#6b7f95" stroke-width="0.4"/><circle cx="1193.6" cy="791.9" r="1" fill="none" stroke="#8a8a8a" stroke-width="0.7"/><circle cx="1176.9" cy="825.3" r="1" fill="none" stroke="#8a8a8a" stroke-width="0.7"/><circle cx="1160.3" cy="808.6" r="1" fill="none" stroke="#8a8a8a" stroke-width="0.7"/><circle cx="1147.7" cy="821.1" r="1" fill="none" stroke="#8a8a8a" stroke-width="0.7"/><path d="M1089.2 749.1 L1090.5 746.9 L1093.3 746.0 L1094.6 743.8 L1096.2 742.2 L1098.4 741.5 L1100.0 739.9 L1100.5 737.7 L1099.4 735.6 L1099.2 733.5 L1100.1 731.3 L1099.2 729.2 L1101.1 728.3 L1102.6 726.8 L1104.6 726.1 L1104.7 723.8 L1103.9 721.5 L1103.7 719.2 L1103.8 716.9 L1104.8 714.6 L1107.2 713.6 L1108.4 711.5 L1110.3 710.1 L1111.2 708.0 L1112.3 706.1 L1114.3 705.1 L1114.8 702.5 L1116.9 701.5 L1118.5 700.1 L1120.5 699.4 L1122.3 698.4 L1122.0 696.0 L1121.0 693.9 L1119.2 692.2 L1118.4 690.0 L1118.8 687.9 L1120.0 686.1 L1121.6 687.6 L1123.0 689.2 L1126.1 691.5 L1128.0 690.7 L1130.2 690.6 L1131.7 688.7 L1133.8 688.4 L1135.7 686.8 L1136.9 684.6 L1139.9 683.1 L1141.1 681.3 L1141.5 679.2 L1144.6 677.7 L1145.7 679.6 L1147.6 680.8 L1149.8 681.9 L1152.2 682.3 L1154.6 681.7 L1156.9 680.8 L1159.9 683.1 L1161.7 680.9 L1163.8 679.2 L1166.4 678.2 L1169.1 677.7 L1171.4 676.3 L1173.8 675.4 L1176.1 675.4 L1178.4 674.6 L1180.7 675.6 L1182.2 677.7 L1183.8 679.3 L1184.5 681.5 L1186.4 682.7 L1188.8 682.7 L1190.7 683.8 L1192.5 682.4 L1194.5 681.6 L1196.8 681.5 L1198.9 681.3 L1200.9 680.7 L1203.0 680.8 L1203.0 683.0 L1203.9 685.0 L1204.5 687.0 L1206.4 688.6 L1206.8 690.7 L1208.8 692.1 L1210.4 693.9 L1211.4 696.1 L1213.7 697.4 L1215.9 699.0 L1218.3 700.0 L1216.9 701.3 L1215.5 702.9 L1213.7 703.8 L1211.8 704.5 L1209.8 704.8 L1207.9 705.3 L1206.0 706.1 L1203.9 706.2 L1201.8 706.6 L1199.8 707.4 L1198.0 708.7 L1195.7 708.1 L1193.7 709.2 L1194.5 711.7 L1194.5 714.3 L1195.0 716.9 L1194.5 719.0 L1193.3 720.9 L1193.0 723.0 L1194.5 724.6 L1195.5 726.5 L1196.6 728.3 L1197.8 730.1 L1198.4 732.2 L1196.9 734.0 L1196.4 736.3 L1195.8 738.5 L1194.8 740.5 L1193.0 742.2 L1192.8 744.6 L1192.4 746.9 L1192.5 749.2 L1191.2 751.4 L1191.1 753.7 L1191.0 756.0 L1189.1 758.0 L1189.2 761.0 L1187.5 763.0 L1184.9 763.1 L1182.2 762.5 L1179.6 763.0 L1180.5 766.5 L1181.9 768.2 L1183.6 769.5 L1186.2 769.6 L1187.7 771.2 L1189.3 772.7 L1190.3 775.2 L1190.1 778.0 L1191.7 779.7 L1191.7 782.3 L1193.3 783.9 L1194.5 785.9 L1192.7 787.9 L1192.4 790.6 L1191.0 792.9 L1190.3 790.8 L1188.6 789.4 L1187.5 787.6 L1185.0 788.8 L1182.2 789.4 L1181.4 787.1 L1180.5 784.9 L1178.7 783.2 L1176.4 782.3 L1174.9 780.3 L1173.0 778.8 L1170.7 778.0 L1169.1 776.2 L1168.4 778.4 L1167.8 780.6 L1166.9 782.7 L1165.9 784.8 L1164.7 786.7 L1163.9 784.7 L1163.1 782.7 L1161.6 781.0 L1161.2 778.8 L1159.0 777.8 L1157.8 775.9 L1156.6 773.9 L1154.5 772.9 L1153.3 770.9 L1152.7 768.8 L1152.2 766.6 L1152.8 764.3 L1152.2 762.1 L1151.1 760.0 L1151.5 757.8 L1149.2 758.3 L1147.0 757.7 L1144.7 757.3 L1142.5 757.0 L1140.2 757.8 L1137.9 757.5 L1135.7 756.9 L1133.3 757.1 L1131.2 758.1 L1128.9 758.8 L1126.6 759.3 L1124.3 759.5 L1122.1 759.1 L1120.1 760.5 L1117.9 760.5 L1115.9 761.1 L1113.8 761.3 L1111.6 761.8 L1109.2 761.6 L1107.0 761.8 L1105.0 763.2 L1102.9 763.9 L1100.6 763.9 L1099.6 762.1 L1097.7 761.1 L1096.2 759.7 L1096.0 757.3 L1094.1 756.2 L1093.4 754.2 L1091.6 753.1 L1090.9 751.0 L1089.2 749.9 Z" fill="#35a0f8" stroke="#6b7f95" stroke-width="0.6"/><path d="M1198.0 766.5 L1200.1 765.9 L1202.0 765.0 L1204.2 764.8 L1206.1 765.7 L1207.2 767.5 L1208.7 768.9 L1210.3 770.0 L1213.0 770.9 L1211.4 772.4 L1211.2 774.7 L1209.5 776.1 L1208.6 778.0 L1210.0 779.6 L1211.2 781.5 L1209.6 782.7 L1208.3 784.3 L1206.6 785.4 L1204.9 786.4 L1203.3 787.6 L1202.1 785.9 L1199.9 785.3 L1198.7 783.7 L1197.2 782.3 L1197.8 780.3 L1198.3 778.3 L1198.0 776.2 Z" fill="#35a0f8" stroke="#6b7f95" stroke-width="0.6"/><path d="M1191.4 690.0 L1198.4 688.4 L1204.5 693.0 L1201.4 697.7 L1196.8 700.7 L1193.7 696.9 Z" fill="#fff" stroke="#8a8a8a" stroke-width="0.6"/><path d="M1181.4 731.5 L1186.1 723.0 L1192.2 718.4 L1194.5 721.5 L1189.9 724.6 L1187.6 727.6" fill="none" stroke="#9aa4b0" stroke-width="0.9"/><circle cx="1221.4" cy="712.3" r="1.5" fill="#35a0f8" stroke="#6b7f95" stroke-width="0.4"/><circle cx="1217.6" cy="718.4" r="1.5" fill="#35a0f8" stroke="#6b7f95" stroke-width="0.4"/><circle cx="1219.1" cy="736.1" r="1.5" fill="#35a0f8" stroke="#6b7f95" stroke-width="0.4"/><circle cx="1213.7" cy="770.7" r="1.5" fill="#35a0f8" stroke="#6b7f95" stroke-width="0.4"/><circle cx="1198.4" cy="792.2" r="1.5" fill="#35a0f8" stroke="#6b7f95" stroke-width="0.4"/><path d="M1052.4 837.8 L1055.7 834.2 L1059.0 834.2 L1062.3 837.8 L1066.9 834.8 L1072.1 834.5 L1075.4 839.7 L1080.7 840.4 L1084.6 845.0 L1083.3 849.0 L1085.3 855.5 L1084.6 862.1 L1089.2 865.4 L1086.6 867.4 L1081.3 865.4 L1077.4 867.4 L1073.4 865.4 L1072.1 859.5 L1072.8 856.9 L1069.5 858.2 L1065.5 863.4 L1061.6 866.1 L1060.3 869.4 L1061.6 872.0 L1060.3 875.3 L1054.4 874.6 L1053.0 871.3 L1049.7 867.4 L1047.8 861.5 L1052.4 857.5 L1051.7 849.0 L1053.0 843.7 L1051.1 839.1 Z" fill="#35a0f8" stroke="#6b7f95" stroke-width="0.6"/><path d="M1064.2 867.4 L1068.2 865.8 L1072.8 868.1 L1073.4 873.3 L1067.5 877.6 L1062.9 876.0 Z" fill="#35a0f8" stroke="#6b7f95" stroke-width="0.6"/></svg>
</div>
<div class="a" style="left:255px;top:880px;width:1665px;height:31px;background:#fff;border-top:1px solid #eceef2"></div>
<div class="t" style="left:255px;width:1665px;text-align:center;top:888px;font-size:14px;line-height:16px;color:#333">Gadmin V9.0 [当前系统版本：9.0.9]</div>
<svg class="a" style="left:1803px;top:853px" width="30" height="29" viewBox="0 0 30 29"><path d="M3 0 H30 V29 H0 V3 Q0 0 3 0 Z" fill="#6cb33e"/><path d="M0 0 H30 L15 14 Z" fill="#84c452"/><path d="M17 4 Q22 9 17 14 Q12 17 7 21 Q5 16 10 13 Q16 10 17 4 Z" fill="#fff"/><path d="M22 11 Q26 17 21 21 Q16 24 11 29 H9 Q9 23 14 20 Q21 17 22 11 Z" fill="#fff"/><path d="M26 20 Q28 25 25 29 H17 Q22 25 26 20 Z" fill="#fff"/></svg>
<div class="a" style="left:1833px;top:853px;width:79px;height:28px;background:#222"></div>
<div class="t" style="left:1838px;top:860px;font-size:14.5px;line-height:16px;color:#fff">0.072374s</div>
<svg class="a" style="left:1813px;top:882px" width="30" height="29" viewBox="0 0 30 29"><path d="M3 0 H30 V29 H0 V3 Q0 0 3 0 Z" fill="#6cb33e"/><path d="M0 0 H30 L15 14 Z" fill="#84c452"/><path d="M17 4 Q22 9 17 14 Q12 17 7 21 Q5 16 10 13 Q16 10 17 4 Z" fill="#fff"/><path d="M22 11 Q26 17 21 21 Q16 24 11 29 H9 Q9 23 14 20 Q21 17 22 11 Z" fill="#fff"/><path d="M26 20 Q28 25 25 29 H17 Q22 25 26 20 Z" fill="#fff"/></svg>
<div class="a" style="left:1843px;top:882px;width:77px;height:29px;background:#222"></div>
<div class="t" style="left:1848px;top:889px;font-size:14.5px;line-height:16px;color:#fff">0.345658s</div>
<div class="t" style="left:1851px;top:894px;font-size:16.5px;line-height:18px;color:rgba(25,150,205,0.9);font-style:italic">cojz8.com</div>
<div class="t" style="left:42.4px;top:54.3px;font-size:16.5px;line-height:16px;color:rgba(150,150,150,0.13);transform-origin:0 100%;transform:rotate(-20deg);pointer-events:none">ld:12026-04-24gadmin</div>
<div class="t" style="left:42.4px;top:184.3px;font-size:16.5px;line-height:16px;color:rgba(150,150,150,0.13);transform-origin:0 100%;transform:rotate(-20deg);pointer-events:none">ld:12026-04-24gadmin</div>
<div class="t" style="left:42.4px;top:314.3px;font-size:16.5px;line-height:16px;color:rgba(150,150,150,0.13);transform-origin:0 100%;transform:rotate(-20deg);pointer-events:none">ld:12026-04-24gadmin</div>
<div class="t" style="left:42.4px;top:444.3px;font-size:16.5px;line-height:16px;color:rgba(150,150,150,0.13);transform-origin:0 100%;transform:rotate(-20deg);pointer-events:none">ld:12026-04-24gadmin</div>
<div class="t" style="left:42.4px;top:574.3px;font-size:16.5px;line-height:16px;color:rgba(150,150,150,0.13);transform-origin:0 100%;transform:rotate(-20deg);pointer-events:none">ld:12026-04-24gadmin</div>
<div class="t" style="left:373.4px;top:54.3px;font-size:16.5px;line-height:16px;color:rgba(150,150,150,0.13);transform-origin:0 100%;transform:rotate(-20deg);pointer-events:none">ld:12026-04-24gadmin</div>
<div class="t" style="left:373.4px;top:184.3px;font-size:16.5px;line-height:16px;color:rgba(150,150,150,0.13);transform-origin:0 100%;transform:rotate(-20deg);pointer-events:none">ld:12026-04-24gadmin</div>
<div class="t" style="left:373.4px;top:314.3px;font-size:16.5px;line-height:16px;color:rgba(150,150,150,0.13);transform-origin:0 100%;transform:rotate(-20deg);pointer-events:none">ld:12026-04-24gadmin</div>
<div class="t" style="left:373.4px;top:444.3px;font-size:16.5px;line-height:16px;color:rgba(150,150,150,0.13);transform-origin:0 100%;transform:rotate(-20deg);pointer-events:none">ld:12026-04-24gadmin</div>
<div class="t" style="left:373.4px;top:574.3px;font-size:16.5px;line-height:16px;color:rgba(150,150,150,0.13);transform-origin:0 100%;transform:rotate(-20deg);pointer-events:none">ld:12026-04-24gadmin</div>
<div class="t" style="left:704.4px;top:54.3px;font-size:16.5px;line-height:16px;color:rgba(150,150,150,0.13);transform-origin:0 100%;transform:rotate(-20deg);pointer-events:none">ld:12026-04-24gadmin</div>
<div class="t" style="left:704.4px;top:184.3px;font-size:16.5px;line-height:16px;color:rgba(150,150,150,0.13);transform-origin:0 100%;transform:rotate(-20deg);pointer-events:none">ld:12026-04-24gadmin</div>
<div class="t" style="left:704.4px;top:314.3px;font-size:16.5px;line-height:16px;color:rgba(150,150,150,0.13);transform-origin:0 100%;transform:rotate(-20deg);pointer-events:none">ld:12026-04-24gadmin</div>
<div class="t" style="left:704.4px;top:444.3px;font-size:16.5px;line-height:16px;color:rgba(150,150,150,0.13);transform-origin:0 100%;transform:rotate(-20deg);pointer-events:none">ld:12026-04-24gadmin</div>
<div class="t" style="left:704.4px;top:574.3px;font-size:16.5px;line-height:16px;color:rgba(150,150,150,0.13);transform-origin:0 100%;transform:rotate(-20deg);pointer-events:none">ld:12026-04-24gadmin</div>
<div class="t" style="left:1035.4px;top:54.3px;font-size:16.5px;line-height:16px;color:rgba(150,150,150,0.13);transform-origin:0 100%;transform:rotate(-20deg);pointer-events:none">ld:12026-04-24gadmin</div>
<div class="t" style="left:1035.4px;top:184.3px;font-size:16.5px;line-height:16px;color:rgba(150,150,150,0.13);transform-origin:0 100%;transform:rotate(-20deg);pointer-events:none">ld:12026-04-24gadmin</div>
<div class="t" style="left:1035.4px;top:314.3px;font-size:16.5px;line-height:16px;color:rgba(150,150,150,0.13);transform-origin:0 100%;transform:rotate(-20deg);pointer-events:none">ld:12026-04-24gadmin</div>
<div class="t" style="left:1035.4px;top:444.3px;font-size:16.5px;line-height:16px;color:rgba(150,150,150,0.13);transform-origin:0 100%;transform:rotate(-20deg);pointer-events:none">ld:12026-04-24gadmin</div>
<div class="t" style="left:1035.4px;top:574.3px;font-size:16.5px;line-height:16px;color:rgba(150,150,150,0.13);transform-origin:0 100%;transform:rotate(-20deg);pointer-events:none">ld:12026-04-24gadmin</div>
<div class="t" style="left:1366.4px;top:54.3px;font-size:16.5px;line-height:16px;color:rgba(150,150,150,0.13);transform-origin:0 100%;transform:rotate(-20deg);pointer-events:none">ld:12026-04-24gadmin</div>
<div class="t" style="left:1366.4px;top:184.3px;font-size:16.5px;line-height:16px;color:rgba(150,150,150,0.13);transform-origin:0 100%;transform:rotate(-20deg);pointer-events:none">ld:12026-04-24gadmin</div>
<div class="t" style="left:1366.4px;top:314.3px;font-size:16.5px;line-height:16px;color:rgba(150,150,150,0.13);transform-origin:0 100%;transform:rotate(-20deg);pointer-events:none">ld:12026-04-24gadmin</div>
<div class="t" style="left:1366.4px;top:444.3px;font-size:16.5px;line-height:16px;color:rgba(150,150,150,0.13);transform-origin:0 100%;transform:rotate(-20deg);pointer-events:none">ld:12026-04-24gadmin</div>
<div class="t" style="left:1366.4px;top:574.3px;font-size:16.5px;line-height:16px;color:rgba(150,150,150,0.13);transform-origin:0 100%;transform:rotate(-20deg);pointer-events:none">ld:12026-04-24gadmin</div>
<div class="t" style="left:1697.4px;top:54.3px;font-size:16.5px;line-height:16px;color:rgba(150,150,150,0.13);transform-origin:0 100%;transform:rotate(-20deg);pointer-events:none">ld:12026-04-24gadmin</div>
<div class="t" style="left:1697.4px;top:184.3px;font-size:16.5px;line-height:16px;color:rgba(150,150,150,0.13);transform-origin:0 100%;transform:rotate(-20deg);pointer-events:none">ld:12026-04-24gadmin</div>
<div class="t" style="left:1697.4px;top:314.3px;font-size:16.5px;line-height:16px;color:rgba(150,150,150,0.13);transform-origin:0 100%;transform:rotate(-20deg);pointer-events:none">ld:12026-04-24gadmin</div>
<div class="t" style="left:1697.4px;top:444.3px;font-size:16.5px;line-height:16px;color:rgba(150,150,150,0.13);transform-origin:0 100%;transform:rotate(-20deg);pointer-events:none">ld:12026-04-24gadmin</div>
<div class="t" style="left:1697.4px;top:574.3px;font-size:16.5px;line-height:16px;color:rgba(150,150,150,0.13);transform-origin:0 100%;transform:rotate(-20deg);pointer-events:none">ld:12026-04-24gadmin</div>
</body></html>
